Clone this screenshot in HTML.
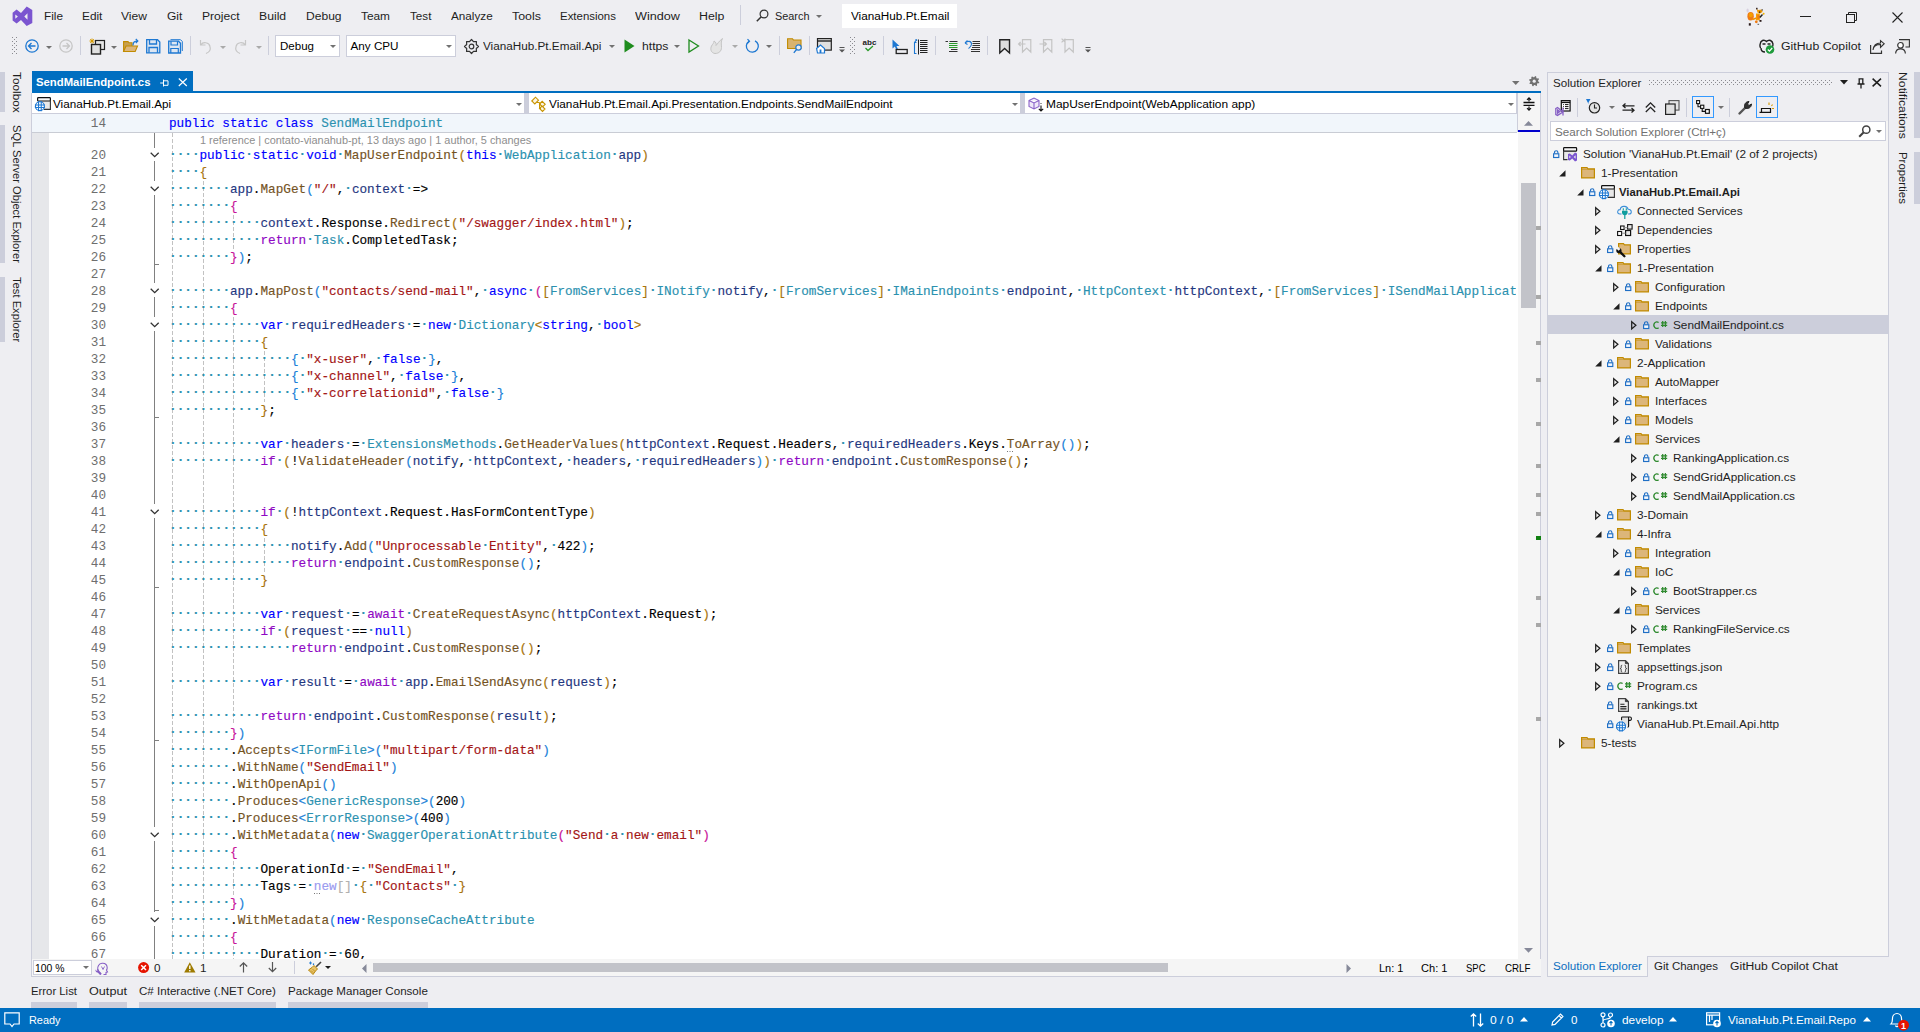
<!DOCTYPE html><html><head><meta charset="utf-8"><style>
*{margin:0;padding:0;box-sizing:border-box}
html,body{width:1920px;height:1032px;overflow:hidden;background:#EEEEF2;font-family:"Liberation Sans",sans-serif;font-size:11.7px;color:#1E1E1E}
.a{position:absolute;white-space:nowrap}
.t{line-height:14px}
.code{font-family:"Liberation Mono",monospace;font-size:12.69px;line-height:17px;color:#000;-webkit-text-stroke:0.15px}
.code i{font-style:normal;color:#2B91AF;font-weight:bold;position:relative;top:-0.8px}
.code b{font-weight:normal}
.code s{text-decoration:none}
.kw{color:#0000FF}.ctl{color:#8F08C4}.ty{color:#2B91AF}.me{color:#74531F}.lo{color:#1F377F}.pr{color:#000}.str{color:#A31515}
.b1{color:#C8149A}.b2{color:#A8740C}.b3{color:#1A7FD8}
.ln{font-family:"Liberation Mono",monospace;font-size:12.69px;line-height:17px;color:#6E6E6E;text-align:right;width:60px}
svg{position:absolute;overflow:visible}
.v{writing-mode:vertical-rl;line-height:14px}
</style></head><body>
<div class="a t" style="left:43.5px;top:8.5px;;transform:scaleX(1.0078);transform-origin:0 0">File</div>
<div class="a t" style="left:82.0px;top:8.5px;;transform:scaleX(1.0118);transform-origin:0 0">Edit</div>
<div class="a t" style="left:121.4px;top:8.5px;;transform:scaleX(1.0338);transform-origin:0 0">View</div>
<div class="a t" style="left:167.0px;top:8.5px;;transform:scaleX(1.0301);transform-origin:0 0">Git</div>
<div class="a t" style="left:201.5px;top:8.5px;;transform:scaleX(1.0367);transform-origin:0 0">Project</div>
<div class="a t" style="left:258.9px;top:8.5px;;transform:scaleX(1.0454);transform-origin:0 0">Build</div>
<div class="a t" style="left:305.5px;top:8.5px;;transform:scaleX(1.0325);transform-origin:0 0">Debug</div>
<div class="a t" style="left:360.5px;top:8.5px;;transform:scaleX(1.0136);transform-origin:0 0">Team</div>
<div class="a t" style="left:410.1px;top:8.5px;;transform:scaleX(0.9973);transform-origin:0 0">Test</div>
<div class="a t" style="left:450.75px;top:8.5px;;transform:scaleX(1.0030);transform-origin:0 0">Analyze</div>
<div class="a t" style="left:511.5px;top:8.5px;;transform:scaleX(1.0617);transform-origin:0 0">Tools</div>
<div class="a t" style="left:559.5px;top:8.5px;;transform:scaleX(0.9785);transform-origin:0 0">Extensions</div>
<div class="a t" style="left:634.5px;top:8.5px;;transform:scaleX(1.0814);transform-origin:0 0">Window</div>
<div class="a t" style="left:698.75px;top:8.5px;;transform:scaleX(1.0597);transform-origin:0 0">Help</div>
<div class="a " style="left:740px;top:5px;width:1px;height:20px;background:#CCCEDB"></div>
<svg style="left:11.5px;top:5.5px;" width="21" height="21" viewBox="0 0 21 21"><path d="M0.6,6.8 L4.6,3.5 L9.0,7.1 L14.7,0.6 L20.3,4.1 L20.3,17.1 L14.7,20.1 L9.0,14.0 L4.6,17.4 L0.6,14.4 Z M3.3,8.4 L5.9,10.6 L3.3,12.8 Z M15.5,7.3 L12.3,10.6 L15.5,13.7 Z" fill="#7B55D0" fill-rule="evenodd"/></svg>
<svg style="left:756px;top:9px;" width="13" height="13" viewBox="0 0 13 13"><circle cx="8" cy="5" r="3.9" fill="none" stroke="#333" stroke-width="1.2"/><path d="M5.3,7.7 L0.8,12.2" stroke="#333" stroke-width="1.5"/></svg>
<div class="a t" style="left:775px;top:8.5px;;transform:scaleX(0.9306);transform-origin:0 0">Search</div>
<svg style="left:815.5px;top:15px;" width="6" height="3" viewBox="0 0 6 3"><path d="M0,0 H6 L3.0,3 Z" fill="#717171"/></svg>
<div class="a " style="left:842px;top:4px;width:115px;height:23.5px;background:#fff"></div>
<div class="a t" style="left:850.5px;top:8.5px;color:#000;transform:scaleX(1.0052);transform-origin:0 0">VianaHub.Pt.Email</div>
<svg style="left:1744.5px;top:6px;" width="20" height="20" viewBox="0 0 20 20"><ellipse cx="5.6" cy="10.3" rx="3.2" ry="4.2" fill="#F07A12"/><ellipse cx="5.8" cy="9" rx="2" ry="2.3" fill="#F5A000"/><ellipse cx="2.6" cy="4.6" rx="1.1" ry="2" fill="#D8D0E0"/><path d="M7.5,13.5 L11.5,12" stroke="#F29000" stroke-width="1.8"/><rect x="11" y="7.5" width="3.8" height="6.8" fill="#F5A000"/><rect x="12.4" y="9" width="2" height="4" fill="#F07A12"/><path d="M11.5,2.5 L13,4 L17,3.5 L17.5,6 L15,7.5 L12.5,6.5 Z" fill="#F29A00"/><rect x="11" y="1.8" width="1.6" height="1.6" fill="#3A2A2A"/><rect x="16.6" y="3" width="1.2" height="1.8" fill="#6A6A70"/><rect x="14" y="5.5" width="1.3" height="1.3" fill="#222"/><path d="M14.8,11.5 L17.5,8.5" stroke="#222" stroke-width="1.5"/><circle cx="18.6" cy="7.8" r="1" fill="#F2B000"/><circle cx="11.3" cy="15.8" r="1.4" fill="#F07A12"/><rect x="3.8" y="17.2" width="2" height="2.4" fill="#2A1A1A"/><rect x="14.5" y="14" width="2" height="1.8" fill="#2A1A1A"/><rect x="12.5" y="17.8" width="1.6" height="1" fill="#555"/></svg>
<div class="a " style="left:1800px;top:16px;width:10.5px;height:1px;background:#222"></div>
<svg style="left:1845.5px;top:11.5px;" width="12" height="12" viewBox="0 0 12 12"><rect x="0.5" y="2.5" width="8" height="8" fill="none" stroke="#222" stroke-width="1"/><path d="M2.5,2.5 V0.5 H10.5 V8.5 H8.5" fill="none" stroke="#222" stroke-width="1"/></svg>
<svg style="left:1891.5px;top:11.5px;" width="11" height="11" viewBox="0 0 11 11"><path d="M0.5,0.5 L10.5,10.5 M10.5,0.5 L0.5,10.5" stroke="#222" stroke-width="1.1"/></svg>
<svg style="left:12px;top:37px;" width="5" height="17" viewBox="0 0 5 17"><rect x="0" y="0" width="1" height="1" fill="#8A8A90"/><rect x="4" y="0" width="1" height="1" fill="#8A8A90"/><rect x="2" y="2" width="1" height="1" fill="#8A8A90"/><rect x="0" y="4" width="1" height="1" fill="#8A8A90"/><rect x="4" y="4" width="1" height="1" fill="#8A8A90"/><rect x="2" y="6" width="1" height="1" fill="#8A8A90"/><rect x="0" y="8" width="1" height="1" fill="#8A8A90"/><rect x="4" y="8" width="1" height="1" fill="#8A8A90"/><rect x="2" y="10" width="1" height="1" fill="#8A8A90"/><rect x="0" y="12" width="1" height="1" fill="#8A8A90"/><rect x="4" y="12" width="1" height="1" fill="#8A8A90"/><rect x="2" y="14" width="1" height="1" fill="#8A8A90"/><rect x="0" y="16" width="1" height="1" fill="#8A8A90"/><rect x="4" y="16" width="1" height="1" fill="#8A8A90"/></svg>
<svg style="left:24.5px;top:38.5px;" width="15" height="15" viewBox="0 0 15 15"><circle cx="7" cy="7" r="6.2" fill="none" stroke="#1E78D2" stroke-width="1.3"/><path d="M10.5,7 H3.6 M6.5,4 L3.5,7 L6.5,10" fill="none" stroke="#1E78D2" stroke-width="1.3"/></svg>
<svg style="left:46px;top:46px;" width="6" height="3" viewBox="0 0 6 3"><path d="M0,0 H6 L3.0,3 Z" fill="#717171"/></svg>
<svg style="left:58.5px;top:38.5px;" width="15" height="15" viewBox="0 0 15 15"><circle cx="7" cy="7" r="6.2" fill="none" stroke="#C6C6C6" stroke-width="1.3"/><path d="M3.5,7 H10.4 M7.5,4 L10.5,7 L7.5,10" fill="none" stroke="#C6C6C6" stroke-width="1.3"/></svg>
<div class="a" style="left:80px;top:36px;width:1px;height:19px;background:#CCCEDB"></div>
<svg style="left:88.5px;top:38px;" width="17" height="17" viewBox="0 0 17 17"><path d="M3,0.5 V5.5 M0.5,3 H5.5 M1.2,1.2 L4.8,4.8 M4.8,1.2 L1.2,4.8" stroke="#D69A00" stroke-width="1"/><rect x="6.5" y="2.5" width="9" height="9" fill="#E6E6E6" stroke="#222" stroke-width="1.2"/><rect x="2.5" y="6.5" width="9" height="9.5" fill="#E0E0E0" stroke="#222" stroke-width="1.4"/></svg>
<svg style="left:111px;top:46px;" width="6" height="3" viewBox="0 0 6 3"><path d="M0,0 H6 L3.0,3 Z" fill="#717171"/></svg>
<svg style="left:123px;top:38px;" width="16" height="15" viewBox="0 0 16 15"><path d="M0.6,3.6 H5 L6,4.8 H9 V13.5 H0.6 Z" fill="#C8A050" stroke="#C18B00" stroke-width="1.1"/><path d="M0.6,13.5 L3,8 H14.5 L12.2,13.5 Z" fill="#DCB67A" stroke="#C18B00" stroke-width="1.1"/><path d="M10,7.5 C10,4 11.5,3 14.5,3 M12.8,1 L14.8,3 L12.8,5" fill="none" stroke="#1E78D2" stroke-width="1.2"/></svg>
<svg style="left:146px;top:38.5px;" width="15" height="15" viewBox="0 0 15 15"><path d="M0.7,0.7 H11.5 L13.8,3 V13.8 H0.7 Z" fill="#DDE6F2" stroke="#1E78D2" stroke-width="1.3"/><path d="M3.5,0.7 V5 H10.5 V0.7 M3,13.8 V8.5 H11.5 V13.8" fill="none" stroke="#1E78D2" stroke-width="1.3"/></svg>
<svg style="left:167.5px;top:38.5px;" width="15" height="15" viewBox="0 0 15 15"><path d="M2.5,0.7 H12.5 L14.3,2.5 V12" fill="none" stroke="#1E78D2" stroke-width="1"/><path d="M0.7,2.2 H10.5 L12.5,4.2 V14 H0.7 Z" fill="#DDE6F2" stroke="#1E78D2" stroke-width="1.3"/><path d="M3,2.2 V6 H9.5 V2.2 M2.8,14 V9.5 H10.3 V14" fill="none" stroke="#1E78D2" stroke-width="1.2"/></svg>
<div class="a" style="left:190px;top:36px;width:1px;height:19px;background:#CCCEDB"></div>
<svg style="left:198.5px;top:38.5px;" width="13" height="15" viewBox="0 0 13 15"><g ><path d="M1.5,1 V6 H6.5 M1.8,5.8 C4,2.5 10,3 11,7.5 C12,11 9.5,13.5 7,14.5" fill="none" stroke="#C6C6C6" stroke-width="1.2"/></g></svg>
<svg style="left:219.5px;top:46px;" width="6" height="3" viewBox="0 0 6 3"><path d="M0,0 H6 L3.0,3 Z" fill="#AAA"/></svg>
<svg style="left:234px;top:38.5px;" width="13" height="15" viewBox="0 0 13 15"><g transform="translate(13,0) scale(-1,1)"><path d="M1.5,1 V6 H6.5 M1.8,5.8 C4,2.5 10,3 11,7.5 C12,11 9.5,13.5 7,14.5" fill="none" stroke="#C6C6C6" stroke-width="1.2"/></g></svg>
<svg style="left:256px;top:46px;" width="6" height="3" viewBox="0 0 6 3"><path d="M0,0 H6 L3.0,3 Z" fill="#AAA"/></svg>
<div class="a" style="left:267.5px;top:36px;width:1px;height:19px;background:#CCCEDB"></div>
<div class="a " style="left:275px;top:35px;width:65px;height:22px;background:#fff;border:1px solid #CCCEDB"></div>
<div class="a t" style="left:279.5px;top:39px;color:#000;transform:scaleX(0.9861);transform-origin:0 0">Debug</div>
<svg style="left:330px;top:44.6px;" width="6" height="3" viewBox="0 0 6 3"><path d="M0,0 H6 L3.0,3 Z" fill="#717171"/></svg>
<div class="a " style="left:346px;top:35px;width:110px;height:22px;background:#fff;border:1px solid #CCCEDB"></div>
<div class="a t" style="left:350.5px;top:39px;color:#000">Any CPU</div>
<svg style="left:446px;top:44.6px;" width="6" height="3" viewBox="0 0 6 3"><path d="M0,0 H6 L3.0,3 Z" fill="#717171"/></svg>
<svg style="left:463.5px;top:38.5px;" width="15" height="15" viewBox="0 0 15 15"><polygon points="14.50,7.50 12.30,9.49 12.45,12.45 9.49,12.30 7.50,14.50 5.51,12.30 2.55,12.45 2.70,9.49 0.50,7.50 2.70,5.51 2.55,2.55 5.51,2.70 7.50,0.50 9.49,2.70 12.45,2.55 12.30,5.51" fill="none" stroke="#333" stroke-width="1.2" stroke-linejoin="round"/><circle cx="7.5" cy="7.5" r="2.3" fill="none" stroke="#333" stroke-width="1.2"/></svg>
<div class="a t" style="left:483px;top:39px;;transform:scaleX(1.0029);transform-origin:0 0">VianaHub.Pt.Email.Api</div>
<svg style="left:608.5px;top:45px;" width="6" height="3" viewBox="0 0 6 3"><path d="M0,0 H6 L3.0,3 Z" fill="#717171"/></svg>
<svg style="left:623.5px;top:39px;" width="11" height="14" viewBox="0 0 11 14"><path d="M0.5,0.5 L10.5,7 L0.5,13.5 Z" fill="#1E8C1E"/></svg>
<div class="a t" style="left:641.5px;top:39px;;transform:scaleX(1.0447);transform-origin:0 0">https</div>
<svg style="left:673.5px;top:45px;" width="6" height="3" viewBox="0 0 6 3"><path d="M0,0 H6 L3.0,3 Z" fill="#717171"/></svg>
<svg style="left:687.5px;top:39px;" width="12" height="14" viewBox="0 0 12 14"><path d="M1,1 L10.5,7 L1,13 Z" fill="none" stroke="#1E8C1E" stroke-width="1.3"/></svg>
<svg style="left:710px;top:38px;" width="13" height="16" viewBox="0 0 13 16"><path d="M5,15.5 C1,15 0,11 1.5,8 C2.5,6 4,5.5 4,3 C6,4 6.5,6 6,7.5 C7.5,6 9,3 12.5,0.5 C10.5,4 11.5,6 11.5,9.5 C11.5,13 9,15.5 5,15.5 Z" fill="#E4E4E4" stroke="#C4C4C4" stroke-width="1"/></svg>
<svg style="left:732px;top:45px;" width="6" height="3" viewBox="0 0 6 3"><path d="M0,0 H6 L3.0,3 Z" fill="#AAA"/></svg>
<svg style="left:744.5px;top:38.5px;" width="15" height="15" viewBox="0 0 15 15"><path d="M4,2.2 A6,6 0 1 0 10,1.8" fill="none" stroke="#1E78D2" stroke-width="1.3"/><path d="M2.5,0.2 L4.5,2.3 L2.2,4.5" fill="none" stroke="#1E78D2" stroke-width="1.2"/></svg>
<svg style="left:766px;top:45px;" width="6" height="3" viewBox="0 0 6 3"><path d="M0,0 H6 L3.0,3 Z" fill="#717171"/></svg>
<div class="a" style="left:778.5px;top:36px;width:1px;height:19px;background:#CCCEDB"></div>
<svg style="left:787px;top:38px;" width="16" height="16" viewBox="0 0 16 16"><path d="M0.6,0.8 H5.5 L6.5,2 H14 V10.5 H0.6 Z" fill="#D9B36E" stroke="#C18B00" stroke-width="1.1"/><circle cx="11.5" cy="9.5" r="2.7" fill="#EEE" stroke="#1E78D2" stroke-width="1.2"/><path d="M9.5,11.5 L6.8,14.8" stroke="#1E78D2" stroke-width="1.3"/></svg>
<div class="a" style="left:808.5px;top:36px;width:1px;height:19px;background:#CCCEDB"></div>
<svg style="left:816px;top:38px;" width="16" height="16" viewBox="0 0 16 16"><rect x="1.5" y="0.6" width="13.8" height="11.5" fill="#E0E0E0" stroke="#222" stroke-width="1.2"/><path d="M1.5,3 H15.3" stroke="#222" stroke-width="1.4"/><path d="M0.6,10.5 L4.5,7 L8.5,10.5 V15 H1.5 Z" fill="#fff" stroke="#1E78D2" stroke-width="1.2"/><rect x="3.6" y="11.5" width="1.8" height="3.5" fill="#1E78D2"/></svg>
<svg style="left:839px;top:46.5px;" width="6" height="6" viewBox="0 0 6 6"><path d="M0.5,0.5 H5.5" stroke="#555" stroke-width="1"/><path d="M0,2.5 H6 L3,5.5 Z" fill="#555"/></svg>
<svg style="left:850px;top:37px;" width="5" height="17" viewBox="0 0 5 17"><rect x="0" y="0" width="1" height="1" fill="#8A8A90"/><rect x="4" y="0" width="1" height="1" fill="#8A8A90"/><rect x="2" y="2" width="1" height="1" fill="#8A8A90"/><rect x="0" y="4" width="1" height="1" fill="#8A8A90"/><rect x="4" y="4" width="1" height="1" fill="#8A8A90"/><rect x="2" y="6" width="1" height="1" fill="#8A8A90"/><rect x="0" y="8" width="1" height="1" fill="#8A8A90"/><rect x="4" y="8" width="1" height="1" fill="#8A8A90"/><rect x="2" y="10" width="1" height="1" fill="#8A8A90"/><rect x="0" y="12" width="1" height="1" fill="#8A8A90"/><rect x="4" y="12" width="1" height="1" fill="#8A8A90"/><rect x="2" y="14" width="1" height="1" fill="#8A8A90"/><rect x="0" y="16" width="1" height="1" fill="#8A8A90"/><rect x="4" y="16" width="1" height="1" fill="#8A8A90"/></svg>
<svg style="left:861.5px;top:38px;" width="15" height="15" viewBox="0 0 15 15"><text x="7.5" y="7" font-family="Liberation Sans" font-weight="bold" font-size="8" text-anchor="middle" fill="#222">abc</text><path d="M3.5,10 L6,12.5 L11,8" fill="none" stroke="#2A9A2A" stroke-width="1.3"/></svg>
<div class="a" style="left:883px;top:36px;width:1px;height:19px;background:#CCCEDB"></div>
<svg style="left:891.5px;top:38.5px;" width="16" height="16" viewBox="0 0 16 16"><path d="M0.5,0.5 V9.5 L2.8,7.5 L4.5,11 L6,10.3 L4.5,7 H7.5 Z" fill="#1E78D2"/><rect x="4.2" y="10.5" width="11" height="4" fill="none" stroke="#222" stroke-width="1.3"/></svg>
<svg style="left:914px;top:38.5px;" width="15" height="16" viewBox="0 0 15 16"><path d="M2.5,3.5 H0.5 V14.5 H2.5 M0.5,3.5 L2.5,0.8" fill="none" stroke="#1E78D2" stroke-width="1.1"/><path d="M1.5,0.5 L2.8,0.7 L2.6,2" fill="none" stroke="#1E78D2" stroke-width="1"/><path d="M4.5,0.5 V15.5" stroke="#222" stroke-width="1"/><path d="M6,1.5 H13.5 M6,3.5 H13.5 M6,5.5 H13.5 M6,7.5 H13.5 M6,9.5 H13.5 M6,11.5 H13.5 M6,13.5 H13.5" stroke="#222" stroke-width="1"/></svg>
<div class="a" style="left:934.8px;top:36px;width:1px;height:19px;background:#CCCEDB"></div>
<svg style="left:945px;top:39px;" width="14" height="14" viewBox="0 0 14 14"><path d="M0.5,2.5 H3 M4.5,2.5 H12.5 M6,10.5 H12.5 M4,12.5 H12.5" stroke="#333" stroke-width="1"/><path d="M4,4.5 H12.5 M4,6.5 H12.5 M4,8.5 H12.5" stroke="#2A9A2A" stroke-width="1"/></svg>
<svg style="left:964px;top:39px;" width="17" height="14" viewBox="0 0 17 14"><path d="M1,4 L3.5,1.5 M1,4 L3.5,5.5 M1.3,4 C3.5,1.5 7.5,1.8 7.5,5 C7.5,7.5 5.5,8.5 4.5,9.5" fill="none" stroke="#1E78D2" stroke-width="1.1"/><path d="M8.5,2.5 H16 M8.5,4.5 H16 M8.5,6.5 H16 M8,8.5 H16 M7,10.5 H16 M7,12.5 H16" stroke="#333" stroke-width="1"/></svg>
<div class="a" style="left:987px;top:36px;width:1px;height:19px;background:#CCCEDB"></div>
<svg style="left:998.5px;top:39px;" width="12" height="15" viewBox="0 0 12 15"><path d="M0.8,0.8 H10.5 V14 L5.6,9.5 L0.8,14 Z" fill="#DDD" stroke="#222" stroke-width="1.4"/></svg>
<svg style="left:1018px;top:39px;" width="14" height="14" viewBox="0 0 14 14"><path d="M4.5,0.7 H12.8 V13 L8.65,9 L4.5,13 Z M0.5,5 H7.5 M2.6,3 L0.6,5 L2.6,7" fill="none" stroke="#C4C4C4" stroke-width="1.2"/></svg>
<svg style="left:1039px;top:39px;" width="14" height="14" viewBox="0 0 14 14"><path d="M4.5,0.7 H12.8 V13 L8.65,9 L4.5,13 Z M0.5,5 H7.5 M5.4,3 L7.4,5 L5.4,7" fill="none" stroke="#C4C4C4" stroke-width="1.2"/></svg>
<svg style="left:1060.5px;top:38px;" width="14" height="15" viewBox="0 0 14 15"><path d="M4,1.7 H12.3 V14 L8.15,10 L4,14 Z M0.6,0.6 L4.4,4.4 M4.4,0.6 L0.6,4.4" fill="none" stroke="#C4C4C4" stroke-width="1.2"/></svg>
<svg style="left:1085px;top:47px;" width="6" height="6" viewBox="0 0 6 6"><path d="M0.5,0.5 H5.5" stroke="#555" stroke-width="1"/><path d="M0,2.5 H6 L3,5.5 Z" fill="#555"/></svg>
<svg style="left:1758.5px;top:38.5px;" width="16" height="15" viewBox="0 0 16 15"><path d="M2,9 C0.5,9 0.3,3 3.5,1.5 C5,0.8 6.5,1.5 7.5,2.5 C8.5,1.5 10,0.8 11.5,1.5 C14.5,3 14.5,7 13,8 M2,9 C2,12 4,13 6,13" fill="none" stroke="#222" stroke-width="1.4"/><path d="M3.5,5 H6.5 M8.5,5 H11.5" stroke="#222" stroke-width="1.3"/><circle cx="11" cy="10.5" r="4.3" fill="#1E9B3C"/><path d="M8.8,10.5 L10.5,12.2 L13.2,9" fill="none" stroke="#fff" stroke-width="1.2"/></svg>
<div class="a t" style="left:1780.5px;top:39px;;transform:scaleX(1.0514);transform-origin:0 0">GitHub Copilot</div>
<svg style="left:1869.5px;top:39.5px;" width="15" height="14" viewBox="0 0 15 14"><path d="M0.6,5 V13.4 H11.5 V10.5" fill="none" stroke="#333" stroke-width="1.2"/><path d="M3,10 C3.5,6 6.5,4.5 10.5,4.5 V7.5 L14.2,3.7 L10.5,0.6 V3 C6,3 3.5,6 3,10 Z" fill="#E8E8E8" stroke="#333" stroke-width="1.1"/></svg>
<svg style="left:1894.5px;top:38.5px;" width="15" height="15" viewBox="0 0 15 15"><path d="M4,0.6 H14.4 V8 H10.5" fill="#E6E6E6" stroke="#333" stroke-width="1.1"/><circle cx="5.5" cy="6.3" r="2.8" fill="#fff" stroke="#333" stroke-width="1.2"/><path d="M0.6,14.5 C0.8,11 2.8,9.8 5.5,9.8 C8.2,9.8 10.2,11 10.4,14.5" fill="none" stroke="#333" stroke-width="1.2"/></svg>
<div class="a " style="left:0px;top:71.6px;width:5px;height:40.7px;background:#CCCEDB"></div>
<div class="a v" style="left:10px;top:71.6px;width:14px;transform:scaleY(1.0092);transform-origin:0 0;">Toolbox</div>
<div class="a " style="left:0px;top:125.4px;width:5px;height:138.1px;background:#CCCEDB"></div>
<div class="a v" style="left:10px;top:125.4px;width:14px;transform:scaleY(0.9552);transform-origin:0 0;">SQL Server Object Explorer</div>
<div class="a " style="left:0px;top:276.6px;width:5px;height:65.4px;background:#CCCEDB"></div>
<div class="a v" style="left:10px;top:276.6px;width:14px;transform:scaleY(0.9579);transform-origin:0 0;">Test Explorer</div>
<div class="a " style="left:32px;top:71px;width:161px;height:22px;background:#006EC0"></div>
<div class="a t" style="left:36px;top:75.3px;color:#fff;font-weight:bold;font-size:11.6px;transform:scaleX(0.9761);transform-origin:0 0">SendMailEndpoint.cs</div>
<svg style="left:160px;top:79px;" width="9" height="8" viewBox="0 0 9 8"><path d="M0.2,4 H3.5 M3.5,0.5 V7.5 M3.5,1.8 H8 V6.3 H3.5" fill="none" stroke="#fff" stroke-width="1"/></svg>
<svg style="left:178.3px;top:78px;" width="10" height="8.5" viewBox="0 0 10 8.5"><path d="M0.8,0.5 L8.8,8 M8.8,0.5 L0.8,8" stroke="#fff" stroke-width="1.2"/></svg>
<svg style="left:1512px;top:81px;" width="7.5" height="4" viewBox="0 0 7.5 4"><path d="M0,0 H7.5 L3.75,4 Z" fill="#717171"/></svg>
<svg style="left:1529px;top:76px;" width="11" height="11" viewBox="0 0 11 11"><polygon points="10.30,6.21 10.00,7.19 8.44,7.37 7.96,7.96 8.09,9.52 7.19,10.00 5.96,9.03 5.20,9.10 4.19,10.30 3.21,10.00 3.03,8.44 2.44,7.96 0.88,8.09 0.40,7.19 1.37,5.96 1.30,5.20 0.10,4.19 0.40,3.21 1.96,3.03 2.44,2.44 2.31,0.88 3.21,0.40 4.44,1.37 5.20,1.30 6.21,0.10 7.19,0.40 7.37,1.96 7.96,2.44 9.52,2.31 10.00,3.21 9.03,4.44 9.10,5.20" fill="#717171"/><circle cx="5.2" cy="5.2" r="1.6" fill="#EEEEF2"/></svg>
<div class="a " style="left:32px;top:91px;width:1509px;height:2px;background:#006EC0"></div>
<div class="a " style="left:31px;top:93px;width:1510px;height:884px;background:#fff;border-left:1px solid #CCCEDB;border-right:1px solid #CCCEDB;border-bottom:1px solid #CCCEDB"></div>
<div class="a " style="left:32px;top:113px;width:1508.5px;height:1.5px;background:#CCCEDB"></div>
<div class="a " style="left:524px;top:93px;width:5px;height:20px;background:#CCCEDB"></div>
<div class="a " style="left:1020px;top:93px;width:5px;height:20px;background:#CCCEDB"></div>
<div class="a " style="left:1516.3px;top:93px;width:1.5px;height:39px;background:#CCCEDB"></div>
<div class="a " style="left:1517.8px;top:93px;width:22.2px;height:866px;background:#F5F5F5"></div>
<svg style="left:34px;top:96.5px;" width="17" height="16" viewBox="0 0 17 16"><rect x="4" y="3.2" width="12" height="9" fill="#E8E8E8"/><rect x="3.6" y="0.6" width="12.8" height="3.4" rx="0.8" fill="#F8F8F8" stroke="#111" stroke-width="1.2"/><path d="M16.4,3.5 V12.4 H10" fill="none" stroke="#333" stroke-width="1.1"/><circle cx="5.9" cy="9.2" r="5" fill="#1E78D2"/><circle cx="5.9" cy="9.2" r="3.85" fill="#fff"/><path d="M0.9000000000000004,7.949999999999999 H10.9 M0.9000000000000004,10.45 H10.9 M4.550000000000001,4.199999999999999 V14.2 M7.25,4.199999999999999 V14.2" stroke="#1E78D2" stroke-width="1.05"/></svg>
<div class="a t" style="left:53px;top:97px;color:#000">VianaHub.Pt.Email.Api</div>
<svg style="left:516px;top:103px;" width="6" height="3" viewBox="0 0 6 3"><path d="M0,0 H6 L3.0,3 Z" fill="#717171"/></svg>
<svg style="left:531px;top:96px;" width="17" height="17" viewBox="0 0 17 17"><g fill="#FBF4E4" stroke="#C89400" stroke-width="1.1"><path d="M0.8,5 L4.5,1.2 L7.5,4.2 L3.8,8 Z"/><path d="M8.5,8 L11.2,5.3 L14.2,8.3 L11.5,11 Z"/><path d="M8.5,12.5 L11,10 L14,13 L11.5,15.5 Z"/></g><path d="M5.5,6.5 H8.5 V12.5 H10 M8.5,8 H10" fill="none" stroke="#C89400" stroke-width="1"/></svg>
<div class="a t" style="left:549px;top:97px;color:#000;transform:scaleX(1.0100);transform-origin:0 0">VianaHub.Pt.Email.Api.Presentation.Endpoints.SendMailEndpoint</div>
<svg style="left:1012px;top:103px;" width="6" height="3" viewBox="0 0 6 3"><path d="M0,0 H6 L3.0,3 Z" fill="#717171"/></svg>
<svg style="left:1028px;top:96.5px;" width="17" height="16" viewBox="0 0 17 16"><path d="M1,3.5 L6,1 L11,3.5 V9.5 L6,12 L1,9.5 Z M1,3.5 L6,6 L11,3.5 M6,6 V12" fill="#EFE8F8" stroke="#8A63C8" stroke-width="1.1"/><path d="M13,6 V6.8 M13,8.5 V13.8 M10.8,11.8 L13,14 L15.2,11.8" fill="none" stroke="#111" stroke-width="1.1"/></svg>
<div class="a t" style="left:1045.5px;top:97px;color:#000;transform:scaleX(1.0204);transform-origin:0 0">MapUserEndpoint(WebApplication app)</div>
<svg style="left:1508px;top:103px;" width="6" height="3" viewBox="0 0 6 3"><path d="M0,0 H6 L3.0,3 Z" fill="#717171"/></svg>
<svg style="left:1523px;top:97px;" width="12" height="14" viewBox="0 0 12 14"><path d="M0.5,5.5 H11.5 M0.5,8.3 H11.5" stroke="#111" stroke-width="1.3"/><path d="M6,1 V4.5 M6,9.5 V13 M4,2.8 L6,0.8 L8,2.8 M4,11.2 L6,13.2 L8,11.2" fill="none" stroke="#111" stroke-width="1.2"/></svg>
<div class="a " style="left:32px;top:114px;width:1484.5px;height:18px;background:#F1F6FB"></div>
<div class="a " style="left:32px;top:131.6px;width:1484.5px;height:1.2px;background:#C9CCD4"></div>
<div class="a ln" style="left:46px;top:115.3px">14</div>
<div class="a code" style="left:169px;top:115.3px"><s class="kw">public</s> <s class="kw">static</s> <s class="kw">class</s> <s class="ty">SendMailEndpoint</s></div>
<div class="a " style="left:32px;top:132.8px;width:17px;height:826.2px;background:#E6E7EA"></div>
<div class="a t" style="left:200px;top:133.3px;font-size:10.9px;color:#8E8E8E;transform:scaleX(1.0031);transform-origin:0 0">1 reference | contato-vianahub-pt, 13 days ago | 1 author, 5 changes</div>
<div class="a" style="left:172.3px;top:133.0px;width:1px;height:826.0px;background:repeating-linear-gradient(to bottom,#C2C2C2 0 4px,transparent 4px 6px)"></div><div class="a" style="left:202.8px;top:180.8px;width:1px;height:782.0px;background:repeating-linear-gradient(to bottom,#C2C2C2 0 4px,transparent 4px 6px)"></div><div class="a" style="left:233.2px;top:214.8px;width:1px;height:34.0px;background:repeating-linear-gradient(to bottom,#C2C2C2 0 4px,transparent 4px 6px)"></div><div class="a" style="left:233.2px;top:316.8px;width:1px;height:408.0px;background:repeating-linear-gradient(to bottom,#C2C2C2 0 4px,transparent 4px 6px)"></div><div class="a" style="left:263.7px;top:350.8px;width:1px;height:51.0px;background:repeating-linear-gradient(to bottom,#C2C2C2 0 4px,transparent 4px 6px)"></div><div class="a" style="left:263.7px;top:537.8px;width:1px;height:34.0px;background:repeating-linear-gradient(to bottom,#C2C2C2 0 4px,transparent 4px 6px)"></div><div class="a" style="left:233.2px;top:860.8px;width:1px;height:34.0px;background:repeating-linear-gradient(to bottom,#C2C2C2 0 4px,transparent 4px 6px)"></div><div class="a" style="left:233.2px;top:945.8px;width:1px;height:17.0px;background:repeating-linear-gradient(to bottom,#C2C2C2 0 4px,transparent 4px 6px)"></div>
<div class="a ln" style="left:46px;top:146.8px">20</div>
<div class="a ln" style="left:46px;top:163.8px">21</div>
<div class="a ln" style="left:46px;top:180.8px">22</div>
<div class="a ln" style="left:46px;top:197.8px">23</div>
<div class="a ln" style="left:46px;top:214.8px">24</div>
<div class="a ln" style="left:46px;top:231.8px">25</div>
<div class="a ln" style="left:46px;top:248.8px">26</div>
<div class="a ln" style="left:46px;top:265.8px">27</div>
<div class="a ln" style="left:46px;top:282.8px">28</div>
<div class="a ln" style="left:46px;top:299.8px">29</div>
<div class="a ln" style="left:46px;top:316.8px">30</div>
<div class="a ln" style="left:46px;top:333.8px">31</div>
<div class="a ln" style="left:46px;top:350.8px">32</div>
<div class="a ln" style="left:46px;top:367.8px">33</div>
<div class="a ln" style="left:46px;top:384.8px">34</div>
<div class="a ln" style="left:46px;top:401.8px">35</div>
<div class="a ln" style="left:46px;top:418.8px">36</div>
<div class="a ln" style="left:46px;top:435.8px">37</div>
<div class="a ln" style="left:46px;top:452.8px">38</div>
<div class="a ln" style="left:46px;top:469.8px">39</div>
<div class="a ln" style="left:46px;top:486.8px">40</div>
<div class="a ln" style="left:46px;top:503.8px">41</div>
<div class="a ln" style="left:46px;top:520.8px">42</div>
<div class="a ln" style="left:46px;top:537.8px">43</div>
<div class="a ln" style="left:46px;top:554.8px">44</div>
<div class="a ln" style="left:46px;top:571.8px">45</div>
<div class="a ln" style="left:46px;top:588.8px">46</div>
<div class="a ln" style="left:46px;top:605.8px">47</div>
<div class="a ln" style="left:46px;top:622.8px">48</div>
<div class="a ln" style="left:46px;top:639.8px">49</div>
<div class="a ln" style="left:46px;top:656.8px">50</div>
<div class="a ln" style="left:46px;top:673.8px">51</div>
<div class="a ln" style="left:46px;top:690.8px">52</div>
<div class="a ln" style="left:46px;top:707.8px">53</div>
<div class="a ln" style="left:46px;top:724.8px">54</div>
<div class="a ln" style="left:46px;top:741.8px">55</div>
<div class="a ln" style="left:46px;top:758.8px">56</div>
<div class="a ln" style="left:46px;top:775.8px">57</div>
<div class="a ln" style="left:46px;top:792.8px">58</div>
<div class="a ln" style="left:46px;top:809.8px">59</div>
<div class="a ln" style="left:46px;top:826.8px">60</div>
<div class="a ln" style="left:46px;top:843.8px">61</div>
<div class="a ln" style="left:46px;top:860.8px">62</div>
<div class="a ln" style="left:46px;top:877.8px">63</div>
<div class="a ln" style="left:46px;top:894.8px">64</div>
<div class="a ln" style="left:46px;top:911.8px">65</div>
<div class="a ln" style="left:46px;top:928.8px">66</div>
<div class="a ln" style="left:46px;top:945.8px">67</div>
<div class="a" style="left:49px;top:133px;width:1467.3px;height:826px;overflow:hidden"><div class="a code" style="left:120px;top:13.8px"><i>·</i><i>·</i><i>·</i><i>·</i><s class="kw">public</s><i>·</i><s class="kw">static</s><i>·</i><s class="kw">void</s><i>·</i><s class="me">MapUserEndpoint</s><b class="b2">(</b><s class="kw">this</s><i>·</i><s class="ty">WebApplication</s><i>·</i><s class="lo">app</s><b class="b2">)</b></div><div class="a code" style="left:120px;top:30.8px"><i>·</i><i>·</i><i>·</i><i>·</i><b class="b2">{</b></div><div class="a code" style="left:120px;top:47.8px"><i>·</i><i>·</i><i>·</i><i>·</i><i>·</i><i>·</i><i>·</i><i>·</i><s class="lo">app</s><s class="pr">.</s><s class="me">MapGet</s><b class="b3">(</b><s class="str">&quot;/&quot;</s><s class="pr">,</s><i>·</i><s class="lo">context</s><i>·</i><s class="pr">=&gt;</s></div><div class="a code" style="left:120px;top:64.8px"><i>·</i><i>·</i><i>·</i><i>·</i><i>·</i><i>·</i><i>·</i><i>·</i><b class="b1">{</b></div><div class="a code" style="left:120px;top:81.8px"><i>·</i><i>·</i><i>·</i><i>·</i><i>·</i><i>·</i><i>·</i><i>·</i><i>·</i><i>·</i><i>·</i><i>·</i><s class="lo">context</s><s class="pr">.</s><s class="pr">Response</s><s class="pr">.</s><s class="me">Redirect</s><b class="b2">(</b><s class="str">&quot;/swagger/index.html&quot;</s><b class="b2">)</b><s class="pr">;</s></div><div class="a code" style="left:120px;top:98.8px"><i>·</i><i>·</i><i>·</i><i>·</i><i>·</i><i>·</i><i>·</i><i>·</i><i>·</i><i>·</i><i>·</i><i>·</i><s class="ctl">return</s><i>·</i><s class="ty">Task</s><s class="pr">.</s><s class="pr">CompletedTask</s><s class="pr">;</s></div><div class="a code" style="left:120px;top:115.8px"><i>·</i><i>·</i><i>·</i><i>·</i><i>·</i><i>·</i><i>·</i><i>·</i><b class="b1">}</b><b class="b3">)</b><s class="pr">;</s></div><div class="a code" style="left:120px;top:132.8px"></div><div class="a code" style="left:120px;top:149.8px"><i>·</i><i>·</i><i>·</i><i>·</i><i>·</i><i>·</i><i>·</i><i>·</i><s class="lo">app</s><s class="pr">.</s><s class="me">MapPost</s><b class="b3">(</b><s class="str">&quot;contacts/send-mail&quot;</s><s class="pr">,</s><i>·</i><s class="kw">async</s><i>·</i><b class="b1">(</b><b class="b2">[</b><s class="ty">FromServices</s><b class="b2">]</b><i>·</i><s class="ty">INotify</s><i>·</i><s class="lo">notify</s><s class="pr">,</s><i>·</i><b class="b2">[</b><s class="ty">FromServices</s><b class="b2">]</b><i>·</i><s class="ty">IMainEndpoints</s><i>·</i><s class="lo">endpoint</s><s class="pr">,</s><i>·</i><s class="ty">HttpContext</s><i>·</i><s class="lo">httpContext</s><s class="pr">,</s><i>·</i><b class="b2">[</b><s class="ty">FromServices</s><b class="b2">]</b><i>·</i><s class="ty">ISendMailApplicat</s></div><div class="a code" style="left:120px;top:166.8px"><i>·</i><i>·</i><i>·</i><i>·</i><i>·</i><i>·</i><i>·</i><i>·</i><b class="b1">{</b></div><div class="a code" style="left:120px;top:183.8px"><i>·</i><i>·</i><i>·</i><i>·</i><i>·</i><i>·</i><i>·</i><i>·</i><i>·</i><i>·</i><i>·</i><i>·</i><s class="kw">var</s><i>·</i><s class="lo">requiredHeaders</s><i>·</i><s class="pr">=</s><i>·</i><s class="kw">new</s><i>·</i><s class="ty">Dictionary</s><b class="b2">&lt;</b><s class="kw">string</s><s class="pr">,</s><i>·</i><s class="kw">bool</s><b class="b2">&gt;</b></div><div class="a code" style="left:120px;top:200.8px"><i>·</i><i>·</i><i>·</i><i>·</i><i>·</i><i>·</i><i>·</i><i>·</i><i>·</i><i>·</i><i>·</i><i>·</i><b class="b2">{</b></div><div class="a code" style="left:120px;top:217.8px"><i>·</i><i>·</i><i>·</i><i>·</i><i>·</i><i>·</i><i>·</i><i>·</i><i>·</i><i>·</i><i>·</i><i>·</i><i>·</i><i>·</i><i>·</i><i>·</i><b class="b3">{</b><i>·</i><s class="str">&quot;x-user&quot;</s><s class="pr">,</s><i>·</i><s class="kw">false</s><i>·</i><b class="b3">}</b><s class="pr">,</s></div><div class="a code" style="left:120px;top:234.8px"><i>·</i><i>·</i><i>·</i><i>·</i><i>·</i><i>·</i><i>·</i><i>·</i><i>·</i><i>·</i><i>·</i><i>·</i><i>·</i><i>·</i><i>·</i><i>·</i><b class="b3">{</b><i>·</i><s class="str">&quot;x-channel&quot;</s><s class="pr">,</s><i>·</i><s class="kw">false</s><i>·</i><b class="b3">}</b><s class="pr">,</s></div><div class="a code" style="left:120px;top:251.8px"><i>·</i><i>·</i><i>·</i><i>·</i><i>·</i><i>·</i><i>·</i><i>·</i><i>·</i><i>·</i><i>·</i><i>·</i><i>·</i><i>·</i><i>·</i><i>·</i><b class="b3">{</b><i>·</i><s class="str">&quot;x-correlationid&quot;</s><s class="pr">,</s><i>·</i><s class="kw">false</s><i>·</i><b class="b3">}</b></div><div class="a code" style="left:120px;top:268.8px"><i>·</i><i>·</i><i>·</i><i>·</i><i>·</i><i>·</i><i>·</i><i>·</i><i>·</i><i>·</i><i>·</i><i>·</i><b class="b2">}</b><s class="pr">;</s></div><div class="a code" style="left:120px;top:285.8px"></div><div class="a code" style="left:120px;top:302.8px"><i>·</i><i>·</i><i>·</i><i>·</i><i>·</i><i>·</i><i>·</i><i>·</i><i>·</i><i>·</i><i>·</i><i>·</i><s class="kw">var</s><i>·</i><s class="lo">headers</s><i>·</i><s class="pr">=</s><i>·</i><s class="ty">ExtensionsMethods</s><s class="pr">.</s><s class="me">GetHeaderValues</s><b class="b2">(</b><s class="lo">httpContext</s><s class="pr">.</s><s class="pr">Request</s><s class="pr">.</s><s class="pr">Headers</s><s class="pr">,</s><i>·</i><s class="lo">requiredHeaders</s><s class="pr">.</s><s class="pr">Keys</s><s class="pr">.</s><s class="me">ToArray</s><b class="b3">(</b><b class="b3">)</b><b class="b2">)</b><s class="pr">;</s></div><div class="a code" style="left:120px;top:319.8px"><i>·</i><i>·</i><i>·</i><i>·</i><i>·</i><i>·</i><i>·</i><i>·</i><i>·</i><i>·</i><i>·</i><i>·</i><s class="ctl">if</s><i>·</i><b class="b2">(</b><s class="pr">!</s><s class="me">ValidateHeader</s><b class="b3">(</b><s class="lo">notify</s><s class="pr">,</s><i>·</i><s class="lo">httpContext</s><s class="pr">,</s><i>·</i><s class="lo">headers</s><s class="pr">,</s><i>·</i><s class="lo">requiredHeaders</s><b class="b3">)</b><b class="b2">)</b><i>·</i><s class="ctl">return</s><i>·</i><s class="lo">endpoint</s><s class="pr">.</s><s class="me">CustomResponse</s><b class="b2">(</b><b class="b2">)</b><s class="pr">;</s></div><div class="a code" style="left:120px;top:336.8px"></div><div class="a code" style="left:120px;top:353.8px"></div><div class="a code" style="left:120px;top:370.8px"><i>·</i><i>·</i><i>·</i><i>·</i><i>·</i><i>·</i><i>·</i><i>·</i><i>·</i><i>·</i><i>·</i><i>·</i><s class="ctl">if</s><i>·</i><b class="b2">(</b><s class="pr">!</s><s class="lo">httpContext</s><s class="pr">.</s><s class="pr">Request</s><s class="pr">.</s><s class="pr">HasFormContentType</s><b class="b2">)</b></div><div class="a code" style="left:120px;top:387.8px"><i>·</i><i>·</i><i>·</i><i>·</i><i>·</i><i>·</i><i>·</i><i>·</i><i>·</i><i>·</i><i>·</i><i>·</i><b class="b2">{</b></div><div class="a code" style="left:120px;top:404.8px"><i>·</i><i>·</i><i>·</i><i>·</i><i>·</i><i>·</i><i>·</i><i>·</i><i>·</i><i>·</i><i>·</i><i>·</i><i>·</i><i>·</i><i>·</i><i>·</i><s class="lo">notify</s><s class="pr">.</s><s class="me">Add</s><b class="b3">(</b><s class="str">&quot;Unprocessable</s><i>·</i><s class="str">Entity&quot;</s><s class="pr">,</s><i>·</i><s class="pr">422</s><b class="b3">)</b><s class="pr">;</s></div><div class="a code" style="left:120px;top:421.8px"><i>·</i><i>·</i><i>·</i><i>·</i><i>·</i><i>·</i><i>·</i><i>·</i><i>·</i><i>·</i><i>·</i><i>·</i><i>·</i><i>·</i><i>·</i><i>·</i><s class="ctl">return</s><i>·</i><s class="lo">endpoint</s><s class="pr">.</s><s class="me">CustomResponse</s><b class="b3">(</b><b class="b3">)</b><s class="pr">;</s></div><div class="a code" style="left:120px;top:438.8px"><i>·</i><i>·</i><i>·</i><i>·</i><i>·</i><i>·</i><i>·</i><i>·</i><i>·</i><i>·</i><i>·</i><i>·</i><b class="b2">}</b></div><div class="a code" style="left:120px;top:455.8px"></div><div class="a code" style="left:120px;top:472.8px"><i>·</i><i>·</i><i>·</i><i>·</i><i>·</i><i>·</i><i>·</i><i>·</i><i>·</i><i>·</i><i>·</i><i>·</i><s class="kw">var</s><i>·</i><s class="lo">request</s><i>·</i><s class="pr">=</s><i>·</i><s class="ctl">await</s><i>·</i><s class="me">CreateRequestAsync</s><b class="b2">(</b><s class="lo">httpContext</s><s class="pr">.</s><s class="pr">Request</s><b class="b2">)</b><s class="pr">;</s></div><div class="a code" style="left:120px;top:489.8px"><i>·</i><i>·</i><i>·</i><i>·</i><i>·</i><i>·</i><i>·</i><i>·</i><i>·</i><i>·</i><i>·</i><i>·</i><s class="ctl">if</s><i>·</i><b class="b2">(</b><s class="lo">request</s><i>·</i><s class="pr">==</s><i>·</i><s class="kw">null</s><b class="b2">)</b></div><div class="a code" style="left:120px;top:506.8px"><i>·</i><i>·</i><i>·</i><i>·</i><i>·</i><i>·</i><i>·</i><i>·</i><i>·</i><i>·</i><i>·</i><i>·</i><i>·</i><i>·</i><i>·</i><i>·</i><s class="ctl">return</s><i>·</i><s class="lo">endpoint</s><s class="pr">.</s><s class="me">CustomResponse</s><b class="b2">(</b><b class="b2">)</b><s class="pr">;</s></div><div class="a code" style="left:120px;top:523.8px"></div><div class="a code" style="left:120px;top:540.8px"><i>·</i><i>·</i><i>·</i><i>·</i><i>·</i><i>·</i><i>·</i><i>·</i><i>·</i><i>·</i><i>·</i><i>·</i><s class="kw">var</s><i>·</i><s class="lo">result</s><i>·</i><s class="pr">=</s><i>·</i><s class="ctl">await</s><i>·</i><s class="lo">app</s><s class="pr">.</s><s class="me">EmailSendAsync</s><b class="b2">(</b><s class="lo">request</s><b class="b2">)</b><s class="pr">;</s></div><div class="a code" style="left:120px;top:557.8px"></div><div class="a code" style="left:120px;top:574.8px"><i>·</i><i>·</i><i>·</i><i>·</i><i>·</i><i>·</i><i>·</i><i>·</i><i>·</i><i>·</i><i>·</i><i>·</i><s class="ctl">return</s><i>·</i><s class="lo">endpoint</s><s class="pr">.</s><s class="me">CustomResponse</s><b class="b2">(</b><s class="lo">result</s><b class="b2">)</b><s class="pr">;</s></div><div class="a code" style="left:120px;top:591.8px"><i>·</i><i>·</i><i>·</i><i>·</i><i>·</i><i>·</i><i>·</i><i>·</i><b class="b1">}</b><b class="b3">)</b></div><div class="a code" style="left:120px;top:608.8px"><i>·</i><i>·</i><i>·</i><i>·</i><i>·</i><i>·</i><i>·</i><i>·</i><s class="pr">.</s><s class="me">Accepts</s><b class="b3">&lt;</b><s class="ty">IFormFile</s><b class="b3">&gt;</b><b class="b3">(</b><s class="str">&quot;multipart/form-data&quot;</s><b class="b3">)</b></div><div class="a code" style="left:120px;top:625.8px"><i>·</i><i>·</i><i>·</i><i>·</i><i>·</i><i>·</i><i>·</i><i>·</i><s class="pr">.</s><s class="me">WithName</s><b class="b3">(</b><s class="str">&quot;SendEmail&quot;</s><b class="b3">)</b></div><div class="a code" style="left:120px;top:642.8px"><i>·</i><i>·</i><i>·</i><i>·</i><i>·</i><i>·</i><i>·</i><i>·</i><s class="pr">.</s><s class="me">WithOpenApi</s><b class="b3">(</b><b class="b3">)</b></div><div class="a code" style="left:120px;top:659.8px"><i>·</i><i>·</i><i>·</i><i>·</i><i>·</i><i>·</i><i>·</i><i>·</i><s class="pr">.</s><s class="me">Produces</s><b class="b3">&lt;</b><s class="ty">GenericResponse</s><b class="b3">&gt;</b><b class="b3">(</b><s class="pr">200</s><b class="b3">)</b></div><div class="a code" style="left:120px;top:676.8px"><i>·</i><i>·</i><i>·</i><i>·</i><i>·</i><i>·</i><i>·</i><i>·</i><s class="pr">.</s><s class="me">Produces</s><b class="b3">&lt;</b><s class="ty">ErrorResponse</s><b class="b3">&gt;</b><b class="b3">(</b><s class="pr">400</s><b class="b3">)</b></div><div class="a code" style="left:120px;top:693.8px"><i>·</i><i>·</i><i>·</i><i>·</i><i>·</i><i>·</i><i>·</i><i>·</i><s class="pr">.</s><s class="me">WithMetadata</s><b class="b3">(</b><s class="kw">new</s><i>·</i><s class="ty">SwaggerOperationAttribute</s><b class="b1">(</b><s class="str">&quot;Send</s><i>·</i><s class="str">a</s><i>·</i><s class="str">new</s><i>·</i><s class="str">email&quot;</s><b class="b1">)</b></div><div class="a code" style="left:120px;top:710.8px"><i>·</i><i>·</i><i>·</i><i>·</i><i>·</i><i>·</i><i>·</i><i>·</i><b class="b1">{</b></div><div class="a code" style="left:120px;top:727.8px"><i>·</i><i>·</i><i>·</i><i>·</i><i>·</i><i>·</i><i>·</i><i>·</i><i>·</i><i>·</i><i>·</i><i>·</i><s class="pr">OperationId</s><i>·</i><s class="pr">=</s><i>·</i><s class="str">&quot;SendEmail&quot;</s><s class="pr">,</s></div><div class="a code" style="left:120px;top:744.8px"><i>·</i><i>·</i><i>·</i><i>·</i><i>·</i><i>·</i><i>·</i><i>·</i><i>·</i><i>·</i><i>·</i><i>·</i><s class="pr">Tags</s><i>·</i><s class="pr">=</s><i>·</i><s style="color:#9A9AF0">new</s><s style="color:#B0B0B0">[]</s><i>·</i><b class="b2">{</b><i>·</i><s class="str">&quot;Contacts&quot;</s><i>·</i><b class="b2">}</b></div><div class="a code" style="left:120px;top:761.8px"><i>·</i><i>·</i><i>·</i><i>·</i><i>·</i><i>·</i><i>·</i><i>·</i><b class="b1">}</b><b class="b3">)</b></div><div class="a code" style="left:120px;top:778.8px"><i>·</i><i>·</i><i>·</i><i>·</i><i>·</i><i>·</i><i>·</i><i>·</i><s class="pr">.</s><s class="me">WithMetadata</s><b class="b3">(</b><s class="kw">new</s><i>·</i><s class="ty">ResponseCacheAttribute</s></div><div class="a code" style="left:120px;top:795.8px"><i>·</i><i>·</i><i>·</i><i>·</i><i>·</i><i>·</i><i>·</i><i>·</i><b class="b1">{</b></div><div class="a code" style="left:120px;top:812.8px"><i>·</i><i>·</i><i>·</i><i>·</i><i>·</i><i>·</i><i>·</i><i>·</i><i>·</i><i>·</i><i>·</i><i>·</i><s class="pr">Duration</s><i>·</i><s class="pr">=</s><i>·</i><s class="pr">60</s><s class="pr">,</s></div></div>
<div class="a" style="left:154px;top:133.0px;width:1px;height:14.5px;background:#808080"></div>
<div class="a" style="left:154px;top:161.3px;width:1px;height:20.2px;background:#808080"></div>
<div class="a" style="left:154px;top:195.3px;width:1px;height:88.2px;background:#808080"></div>
<div class="a" style="left:154px;top:297.3px;width:1px;height:20.2px;background:#808080"></div>
<div class="a" style="left:154px;top:331.3px;width:1px;height:173.2px;background:#808080"></div>
<div class="a" style="left:154px;top:518.3px;width:1px;height:309.2px;background:#808080"></div>
<div class="a" style="left:154px;top:841.3px;width:1px;height:71.2px;background:#808080"></div>
<div class="a" style="left:154px;top:926.3px;width:1px;height:32.7px;background:#808080"></div>
<svg style="left:149.7px;top:152.10000000000002px;" width="10" height="6" viewBox="0 0 10 6"><path d="M0.7,0.7 L4.7,4.7 L8.7,0.7" fill="none" stroke="#333" stroke-width="1.3"/></svg>
<svg style="left:149.7px;top:186.10000000000002px;" width="10" height="6" viewBox="0 0 10 6"><path d="M0.7,0.7 L4.7,4.7 L8.7,0.7" fill="none" stroke="#333" stroke-width="1.3"/></svg>
<svg style="left:149.7px;top:288.1px;" width="10" height="6" viewBox="0 0 10 6"><path d="M0.7,0.7 L4.7,4.7 L8.7,0.7" fill="none" stroke="#333" stroke-width="1.3"/></svg>
<svg style="left:149.7px;top:322.1px;" width="10" height="6" viewBox="0 0 10 6"><path d="M0.7,0.7 L4.7,4.7 L8.7,0.7" fill="none" stroke="#333" stroke-width="1.3"/></svg>
<svg style="left:149.7px;top:509.1px;" width="10" height="6" viewBox="0 0 10 6"><path d="M0.7,0.7 L4.7,4.7 L8.7,0.7" fill="none" stroke="#333" stroke-width="1.3"/></svg>
<svg style="left:149.7px;top:832.0999999999999px;" width="10" height="6" viewBox="0 0 10 6"><path d="M0.7,0.7 L4.7,4.7 L8.7,0.7" fill="none" stroke="#333" stroke-width="1.3"/></svg>
<svg style="left:149.7px;top:917.0999999999999px;" width="10" height="6" viewBox="0 0 10 6"><path d="M0.7,0.7 L4.7,4.7 L8.7,0.7" fill="none" stroke="#333" stroke-width="1.3"/></svg>
<div class="a" style="left:154px;top:264.4px;width:5px;height:1px;background:#808080"></div>
<div class="a" style="left:154px;top:417.4px;width:5px;height:1px;background:#808080"></div>
<div class="a" style="left:154px;top:587.4px;width:5px;height:1px;background:#808080"></div>
<div class="a" style="left:154px;top:740.4px;width:5px;height:1px;background:#808080"></div>
<div class="a" style="left:154px;top:910.4px;width:5px;height:1px;background:#808080"></div>
<svg style="left:1007.37px;top:450.8px;" width="7" height="2" viewBox="0 0 7 2"><rect x="0" y="0" width="1" height="1" fill="#777"/><rect x="2.5" y="0" width="1" height="1" fill="#777"/><rect x="5" y="0" width="1" height="1" fill="#777"/></svg>
<svg style="left:314.223px;top:892.8px;" width="7" height="2" viewBox="0 0 7 2"><rect x="0" y="0" width="1" height="1" fill="#777"/><rect x="2.5" y="0" width="1" height="1" fill="#777"/><rect x="5" y="0" width="1" height="1" fill="#777"/></svg>
<svg style="left:1524px;top:121.3px;" width="9" height="4.7" viewBox="0 0 9 4.7"><path d="M0,4.7 H9 L4.5,0 Z" fill="#868999"/></svg>
<div class="a " style="left:1517.8px;top:130px;width:22.2px;height:1.8px;background:#0000CC"></div>
<div class="a " style="left:1521px;top:182.7px;width:15px;height:125px;background:#C2C3C9"></div>
<div class="a " style="left:1535.5px;top:225.7px;width:5px;height:4px;background:#A8A8A8"></div>
<div class="a " style="left:1535.5px;top:295px;width:5px;height:4px;background:#A8A8A8"></div>
<div class="a " style="left:1535.5px;top:340.6px;width:5px;height:4px;background:#A8A8A8"></div>
<div class="a " style="left:1535.5px;top:377.8px;width:5px;height:4px;background:#A8A8A8"></div>
<div class="a " style="left:1535.5px;top:422px;width:5px;height:4px;background:#A8A8A8"></div>
<div class="a " style="left:1535.5px;top:463.7px;width:5px;height:4px;background:#A8A8A8"></div>
<div class="a " style="left:1535.5px;top:493px;width:5px;height:4px;background:#A8A8A8"></div>
<div class="a " style="left:1535.5px;top:511.70000000000005px;width:5px;height:4px;background:#A8A8A8"></div>
<div class="a " style="left:1535.5px;top:596.4px;width:5px;height:4px;background:#A8A8A8"></div>
<div class="a " style="left:1535.5px;top:622.9px;width:5px;height:4px;background:#A8A8A8"></div>
<div class="a " style="left:1535.5px;top:716.6px;width:5px;height:4px;background:#A8A8A8"></div>
<div class="a " style="left:1535.5px;top:535.8px;width:5px;height:4px;background:#108010"></div>
<svg style="left:1524px;top:948px;" width="9" height="4.7" viewBox="0 0 9 4.7"><path d="M0,0 H9 L4.5,4.7 Z" fill="#868999"/></svg>
<div class="a " style="left:32px;top:959px;width:1508.5px;height:17px;background:#F5F5F5"></div>
<div class="a " style="left:32.5px;top:959.7px;width:59px;height:15.8px;background:#fff;border:1px solid #CCCEDB"></div>
<div class="a t" style="left:34.6px;top:961px;color:#000;transform:scaleX(0.8892);transform-origin:0 0">100 %</div>
<svg style="left:83px;top:966px;" width="6" height="3" viewBox="0 0 6 3"><path d="M0,0 H6 L3.0,3 Z" fill="#717171"/></svg>
<svg style="left:94.5px;top:961.5px;" width="13" height="13" viewBox="0 0 13 13"><path d="M5,12.5 V10.5 C2.5,9.5 2,6 3.5,3.5 C5,1 9,0.5 11,2.5 C12.5,4 12.5,7 11.5,8 L12.5,10 L11,10.5 V12.5 H8.5" fill="none" stroke="#865FC5" stroke-width="1.1"/><path d="M0.5,7.5 C0.2,9 1,10.5 2.5,10.5 L5.5,13 L6.8,11.8 L4.2,9.2 C4.3,7.7 3,6.8 1.8,7 L2.8,8.3 L1.8,9 Z" fill="#865FC5"/><path d="M6.5,4.5 L8,7.5 L9.5,4.5" fill="none" stroke="#865FC5" stroke-width="0.9"/></svg>
<svg style="left:138px;top:962px;" width="12" height="12" viewBox="0 0 12 12"><circle cx="5.6" cy="5.6" r="5.5" fill="#E51400"/><path d="M3.2,3.2 L8,8 M8,3.2 L3.2,8" stroke="#fff" stroke-width="1.5"/></svg>
<div class="a t" style="left:154px;top:961px;">0</div>
<svg style="left:183.5px;top:962px;" width="12" height="11" viewBox="0 0 12 11"><path d="M5.8,0.3 L11.5,10.5 H0.2 Z" fill="#9E7B00"/><path d="M5.8,3.5 V7" stroke="#fff" stroke-width="1.4"/><rect x="5.1" y="8" width="1.4" height="1.4" fill="#fff"/></svg>
<div class="a t" style="left:200px;top:961px;">1</div>
<svg style="left:238.8px;top:962px;" width="9" height="11" viewBox="0 0 9 11"><path d="M4.5,10.5 V1 M0.8,4.5 L4.5,0.8 L8.2,4.5" fill="none" stroke="#555" stroke-width="1.2"/></svg>
<svg style="left:267.5px;top:962px;" width="9" height="11" viewBox="0 0 9 11"><path d="M4.5,0 V9.5 M0.8,6 L4.5,9.7 L8.2,6" fill="none" stroke="#555" stroke-width="1.2"/></svg>
<div class="a " style="left:293.5px;top:961px;width:1px;height:13px;background:#CCCEDB"></div>
<svg style="left:307.5px;top:961px;" width="14" height="14" viewBox="0 0 14 14"><path d="M2.5,0.5 V3.5 M1,2 H4 M5.5,2.5 V4 M4.8,3.2 H6.2" stroke="#1E78D2" stroke-width="0.9"/><path d="M13,1 L8.2,5.8" stroke="#444" stroke-width="1.6"/><path d="M6,4.5 L9.5,8 L7.5,10 L5,13.5 L0.5,9 L4,6.5 Z" fill="#E9C46A" stroke="#B8860B" stroke-width="1"/><path d="M3,9.5 L5.2,11.7 M4.5,8 L6.8,10.3" stroke="#B8860B" stroke-width="0.8"/></svg>
<svg style="left:325px;top:966px;" width="6" height="3" viewBox="0 0 6 3"><path d="M0,0 H6 L3.0,3 Z" fill="#1E1E1E"/></svg>
<svg style="left:362px;top:963.5px;" width="5" height="9" viewBox="0 0 5 9"><path d="M4.5,0 V9 L0,4.5 Z" fill="#868999"/></svg>
<div class="a " style="left:373px;top:963px;width:795px;height:9px;background:#C2C3C9"></div>
<svg style="left:1346px;top:963.5px;" width="5" height="9" viewBox="0 0 5 9"><path d="M0.5,0 V9 L5,4.5 Z" fill="#868999"/></svg>
<div class="a t" style="left:1379px;top:961px;color:#000;transform:scaleX(0.9415);transform-origin:0 0">Ln: 1</div>
<div class="a t" style="left:1421px;top:961px;color:#000;transform:scaleX(0.9476);transform-origin:0 0">Ch: 1</div>
<div class="a t" style="left:1466px;top:961px;color:#000;transform:scaleX(0.8105);transform-origin:0 0">SPC</div>
<div class="a t" style="left:1505px;top:961px;color:#000;transform:scaleX(0.8346);transform-origin:0 0">CRLF</div>
<div class="a t" style="left:31px;top:984px;;transform:scaleX(0.9693);transform-origin:0 0">Error List</div>
<div class="a " style="left:31px;top:1002px;width:46px;height:6px;background:#CCCEDB"></div>
<div class="a t" style="left:89px;top:984px;;transform:scaleX(1.0819);transform-origin:0 0">Output</div>
<div class="a " style="left:89px;top:1002px;width:38px;height:6px;background:#CCCEDB"></div>
<div class="a t" style="left:139px;top:984px;;transform:scaleX(0.9908);transform-origin:0 0">C# Interactive (.NET Core)</div>
<div class="a " style="left:139px;top:1002px;width:137px;height:6px;background:#CCCEDB"></div>
<div class="a t" style="left:288px;top:984px;;transform:scaleX(0.9919);transform-origin:0 0">Package Manager Console</div>
<div class="a " style="left:288px;top:1002px;width:140px;height:6px;background:#CCCEDB"></div>
<div class="a " style="left:0px;top:1008px;width:1920px;height:24px;background:#006EC0"></div>
<svg style="left:4px;top:1012px;" width="17" height="16" viewBox="0 0 17 16"><path d="M0.8,0.8 H15.2 V12 H10 L8,14.5 L6,12 H0.8 Z" fill="none" stroke="#fff" stroke-width="1.2"/></svg>
<div class="a t" style="left:28.5px;top:1013px;color:#fff;font-size:11.6px;transform:scaleX(0.9394);transform-origin:0 0">Ready</div>
<svg style="left:1469.5px;top:1012.5px;" width="14" height="14" viewBox="0 0 14 14"><path d="M3.5,13.5 V1 M0.8,3.5 L3.5,0.8 L6.2,3.5 M10.5,0.5 V13 M7.8,10.5 L10.5,13.2 L13.2,10.5" fill="none" stroke="#fff" stroke-width="1.3"/></svg>
<div class="a t" style="left:1490px;top:1013px;color:#fff;font-size:11.6px;transform:scaleX(1.0412);transform-origin:0 0">0 / 0</div>
<svg style="left:1519.5px;top:1017px;" width="8" height="4.5" viewBox="0 0 8 4.5"><path d="M0,4.5 H8 L4.0,0 Z" fill="#fff"/></svg>
<svg style="left:1551px;top:1013px;" width="13" height="13" viewBox="0 0 13 13"><path d="M1,12 L1.6,9 L9.5,1.1 L11.9,3.5 L4,11.4 Z M8,2.6 L10.4,5" fill="none" stroke="#fff" stroke-width="1.2"/></svg>
<div class="a t" style="left:1571px;top:1013px;color:#fff;font-size:11.6px">0</div>
<svg style="left:1600px;top:1012px;" width="16" height="16" viewBox="0 0 16 16"><circle cx="3" cy="2.8" r="2" fill="none" stroke="#fff" stroke-width="1.2"/><circle cx="3" cy="13" r="2" fill="none" stroke="#fff" stroke-width="1.2"/><circle cx="10.5" cy="3" r="2" fill="none" stroke="#fff" stroke-width="1.2"/><path d="M3,4.8 V11 M3,9 C3,6 10.5,8 10.5,5" fill="none" stroke="#fff" stroke-width="1.2"/><circle cx="11" cy="11.5" r="3.8" fill="#fff"/><path d="M11,13.5 V9.5 M9.5,11 L11,9.5 L12.5,11" stroke="#006EC0" stroke-width="1.1" fill="none"/></svg>
<div class="a t" style="left:1622px;top:1013px;color:#fff;font-size:11.6px;transform:scaleX(1.0213);transform-origin:0 0">develop</div>
<svg style="left:1669px;top:1017px;" width="8" height="4.5" viewBox="0 0 8 4.5"><path d="M0,4.5 H8 L4.0,0 Z" fill="#fff"/></svg>
<svg style="left:1705.5px;top:1012px;" width="16" height="16" viewBox="0 0 16 16"><rect x="0.6" y="0.8" width="13" height="12" fill="none" stroke="#fff" stroke-width="1.2"/><path d="M0.6,3.2 H13.6 M3.5,3.5 V10 M6,3.5 V8" stroke="#fff" stroke-width="1.2"/><circle cx="11" cy="11.5" r="3.8" fill="#fff"/><path d="M11,13.5 V9.5 M9.5,11 L11,9.5 L12.5,11" stroke="#006EC0" stroke-width="1.1" fill="none"/></svg>
<div class="a t" style="left:1727.5px;top:1013px;color:#fff;font-size:11.6px;transform:scaleX(0.9992);transform-origin:0 0">VianaHub.Pt.Email.Repo</div>
<svg style="left:1863px;top:1017px;" width="8" height="4.5" viewBox="0 0 8 4.5"><path d="M0,4.5 H8 L4.0,0 Z" fill="#fff"/></svg>
<svg style="left:1889px;top:1012px;" width="18" height="18" viewBox="0 0 18 18"><path d="M2,12 H14 C12.5,10.5 12.5,9 12.5,6.5 C12.5,3.5 10.5,1.5 8,1.5 C5.5,1.5 3.5,3.5 3.5,6.5 C3.5,9 3.5,10.5 2,12 Z M6.5,13.5 C7,15 9,15 9.5,13.5" fill="none" stroke="#fff" stroke-width="1.2"/><circle cx="14.5" cy="13.2" r="5.5" fill="#E51400"/><text x="14.5" y="17" font-family="Liberation Sans" font-size="9" font-weight="bold" fill="#fff" text-anchor="middle">1</text></svg>
<div class="a " style="left:1547px;top:71.5px;width:342px;height:885.5px;background:#F5F5F5;border:1px solid #CCCEDB"></div>
<div class="a " style="left:1548px;top:72.5px;width:340px;height:48.5px;background:#EEEEF2"></div>
<div class="a t" style="left:1552.5px;top:75.5px;font-size:11.6px;transform:scaleX(1.0018);transform-origin:0 0">Solution Explorer</div>
<svg style="left:1649px;top:80px;" width="184" height="5" viewBox="0 0 184 5"><rect x="0" y="0" width="1" height="1" fill="#8A8A90"/><rect x="4" y="0" width="1" height="1" fill="#8A8A90"/><rect x="8" y="0" width="1" height="1" fill="#8A8A90"/><rect x="12" y="0" width="1" height="1" fill="#8A8A90"/><rect x="16" y="0" width="1" height="1" fill="#8A8A90"/><rect x="20" y="0" width="1" height="1" fill="#8A8A90"/><rect x="24" y="0" width="1" height="1" fill="#8A8A90"/><rect x="28" y="0" width="1" height="1" fill="#8A8A90"/><rect x="32" y="0" width="1" height="1" fill="#8A8A90"/><rect x="36" y="0" width="1" height="1" fill="#8A8A90"/><rect x="40" y="0" width="1" height="1" fill="#8A8A90"/><rect x="44" y="0" width="1" height="1" fill="#8A8A90"/><rect x="48" y="0" width="1" height="1" fill="#8A8A90"/><rect x="52" y="0" width="1" height="1" fill="#8A8A90"/><rect x="56" y="0" width="1" height="1" fill="#8A8A90"/><rect x="60" y="0" width="1" height="1" fill="#8A8A90"/><rect x="64" y="0" width="1" height="1" fill="#8A8A90"/><rect x="68" y="0" width="1" height="1" fill="#8A8A90"/><rect x="72" y="0" width="1" height="1" fill="#8A8A90"/><rect x="76" y="0" width="1" height="1" fill="#8A8A90"/><rect x="80" y="0" width="1" height="1" fill="#8A8A90"/><rect x="84" y="0" width="1" height="1" fill="#8A8A90"/><rect x="88" y="0" width="1" height="1" fill="#8A8A90"/><rect x="92" y="0" width="1" height="1" fill="#8A8A90"/><rect x="96" y="0" width="1" height="1" fill="#8A8A90"/><rect x="100" y="0" width="1" height="1" fill="#8A8A90"/><rect x="104" y="0" width="1" height="1" fill="#8A8A90"/><rect x="108" y="0" width="1" height="1" fill="#8A8A90"/><rect x="112" y="0" width="1" height="1" fill="#8A8A90"/><rect x="116" y="0" width="1" height="1" fill="#8A8A90"/><rect x="120" y="0" width="1" height="1" fill="#8A8A90"/><rect x="124" y="0" width="1" height="1" fill="#8A8A90"/><rect x="128" y="0" width="1" height="1" fill="#8A8A90"/><rect x="132" y="0" width="1" height="1" fill="#8A8A90"/><rect x="136" y="0" width="1" height="1" fill="#8A8A90"/><rect x="140" y="0" width="1" height="1" fill="#8A8A90"/><rect x="144" y="0" width="1" height="1" fill="#8A8A90"/><rect x="148" y="0" width="1" height="1" fill="#8A8A90"/><rect x="152" y="0" width="1" height="1" fill="#8A8A90"/><rect x="156" y="0" width="1" height="1" fill="#8A8A90"/><rect x="160" y="0" width="1" height="1" fill="#8A8A90"/><rect x="164" y="0" width="1" height="1" fill="#8A8A90"/><rect x="168" y="0" width="1" height="1" fill="#8A8A90"/><rect x="172" y="0" width="1" height="1" fill="#8A8A90"/><rect x="176" y="0" width="1" height="1" fill="#8A8A90"/><rect x="180" y="0" width="1" height="1" fill="#8A8A90"/><rect x="2" y="2" width="1" height="1" fill="#8A8A90"/><rect x="6" y="2" width="1" height="1" fill="#8A8A90"/><rect x="10" y="2" width="1" height="1" fill="#8A8A90"/><rect x="14" y="2" width="1" height="1" fill="#8A8A90"/><rect x="18" y="2" width="1" height="1" fill="#8A8A90"/><rect x="22" y="2" width="1" height="1" fill="#8A8A90"/><rect x="26" y="2" width="1" height="1" fill="#8A8A90"/><rect x="30" y="2" width="1" height="1" fill="#8A8A90"/><rect x="34" y="2" width="1" height="1" fill="#8A8A90"/><rect x="38" y="2" width="1" height="1" fill="#8A8A90"/><rect x="42" y="2" width="1" height="1" fill="#8A8A90"/><rect x="46" y="2" width="1" height="1" fill="#8A8A90"/><rect x="50" y="2" width="1" height="1" fill="#8A8A90"/><rect x="54" y="2" width="1" height="1" fill="#8A8A90"/><rect x="58" y="2" width="1" height="1" fill="#8A8A90"/><rect x="62" y="2" width="1" height="1" fill="#8A8A90"/><rect x="66" y="2" width="1" height="1" fill="#8A8A90"/><rect x="70" y="2" width="1" height="1" fill="#8A8A90"/><rect x="74" y="2" width="1" height="1" fill="#8A8A90"/><rect x="78" y="2" width="1" height="1" fill="#8A8A90"/><rect x="82" y="2" width="1" height="1" fill="#8A8A90"/><rect x="86" y="2" width="1" height="1" fill="#8A8A90"/><rect x="90" y="2" width="1" height="1" fill="#8A8A90"/><rect x="94" y="2" width="1" height="1" fill="#8A8A90"/><rect x="98" y="2" width="1" height="1" fill="#8A8A90"/><rect x="102" y="2" width="1" height="1" fill="#8A8A90"/><rect x="106" y="2" width="1" height="1" fill="#8A8A90"/><rect x="110" y="2" width="1" height="1" fill="#8A8A90"/><rect x="114" y="2" width="1" height="1" fill="#8A8A90"/><rect x="118" y="2" width="1" height="1" fill="#8A8A90"/><rect x="122" y="2" width="1" height="1" fill="#8A8A90"/><rect x="126" y="2" width="1" height="1" fill="#8A8A90"/><rect x="130" y="2" width="1" height="1" fill="#8A8A90"/><rect x="134" y="2" width="1" height="1" fill="#8A8A90"/><rect x="138" y="2" width="1" height="1" fill="#8A8A90"/><rect x="142" y="2" width="1" height="1" fill="#8A8A90"/><rect x="146" y="2" width="1" height="1" fill="#8A8A90"/><rect x="150" y="2" width="1" height="1" fill="#8A8A90"/><rect x="154" y="2" width="1" height="1" fill="#8A8A90"/><rect x="158" y="2" width="1" height="1" fill="#8A8A90"/><rect x="162" y="2" width="1" height="1" fill="#8A8A90"/><rect x="166" y="2" width="1" height="1" fill="#8A8A90"/><rect x="170" y="2" width="1" height="1" fill="#8A8A90"/><rect x="174" y="2" width="1" height="1" fill="#8A8A90"/><rect x="178" y="2" width="1" height="1" fill="#8A8A90"/><rect x="182" y="2" width="1" height="1" fill="#8A8A90"/><rect x="0" y="4" width="1" height="1" fill="#8A8A90"/><rect x="4" y="4" width="1" height="1" fill="#8A8A90"/><rect x="8" y="4" width="1" height="1" fill="#8A8A90"/><rect x="12" y="4" width="1" height="1" fill="#8A8A90"/><rect x="16" y="4" width="1" height="1" fill="#8A8A90"/><rect x="20" y="4" width="1" height="1" fill="#8A8A90"/><rect x="24" y="4" width="1" height="1" fill="#8A8A90"/><rect x="28" y="4" width="1" height="1" fill="#8A8A90"/><rect x="32" y="4" width="1" height="1" fill="#8A8A90"/><rect x="36" y="4" width="1" height="1" fill="#8A8A90"/><rect x="40" y="4" width="1" height="1" fill="#8A8A90"/><rect x="44" y="4" width="1" height="1" fill="#8A8A90"/><rect x="48" y="4" width="1" height="1" fill="#8A8A90"/><rect x="52" y="4" width="1" height="1" fill="#8A8A90"/><rect x="56" y="4" width="1" height="1" fill="#8A8A90"/><rect x="60" y="4" width="1" height="1" fill="#8A8A90"/><rect x="64" y="4" width="1" height="1" fill="#8A8A90"/><rect x="68" y="4" width="1" height="1" fill="#8A8A90"/><rect x="72" y="4" width="1" height="1" fill="#8A8A90"/><rect x="76" y="4" width="1" height="1" fill="#8A8A90"/><rect x="80" y="4" width="1" height="1" fill="#8A8A90"/><rect x="84" y="4" width="1" height="1" fill="#8A8A90"/><rect x="88" y="4" width="1" height="1" fill="#8A8A90"/><rect x="92" y="4" width="1" height="1" fill="#8A8A90"/><rect x="96" y="4" width="1" height="1" fill="#8A8A90"/><rect x="100" y="4" width="1" height="1" fill="#8A8A90"/><rect x="104" y="4" width="1" height="1" fill="#8A8A90"/><rect x="108" y="4" width="1" height="1" fill="#8A8A90"/><rect x="112" y="4" width="1" height="1" fill="#8A8A90"/><rect x="116" y="4" width="1" height="1" fill="#8A8A90"/><rect x="120" y="4" width="1" height="1" fill="#8A8A90"/><rect x="124" y="4" width="1" height="1" fill="#8A8A90"/><rect x="128" y="4" width="1" height="1" fill="#8A8A90"/><rect x="132" y="4" width="1" height="1" fill="#8A8A90"/><rect x="136" y="4" width="1" height="1" fill="#8A8A90"/><rect x="140" y="4" width="1" height="1" fill="#8A8A90"/><rect x="144" y="4" width="1" height="1" fill="#8A8A90"/><rect x="148" y="4" width="1" height="1" fill="#8A8A90"/><rect x="152" y="4" width="1" height="1" fill="#8A8A90"/><rect x="156" y="4" width="1" height="1" fill="#8A8A90"/><rect x="160" y="4" width="1" height="1" fill="#8A8A90"/><rect x="164" y="4" width="1" height="1" fill="#8A8A90"/><rect x="168" y="4" width="1" height="1" fill="#8A8A90"/><rect x="172" y="4" width="1" height="1" fill="#8A8A90"/><rect x="176" y="4" width="1" height="1" fill="#8A8A90"/><rect x="180" y="4" width="1" height="1" fill="#8A8A90"/></svg>
<svg style="left:1840px;top:80px;" width="8" height="4.5" viewBox="0 0 8 4.5"><path d="M0,0 H8 L4.0,4.5 Z" fill="#1E1E1E"/></svg>
<svg style="left:1857px;top:77.5px;" width="8" height="11" viewBox="0 0 8 11"><path d="M1.5,0.8 H6.5 M2.2,0.8 V6 H5.8 V0.8 M0.5,6 H7.5 M4,6 V10.5" fill="none" stroke="#1E1E1E" stroke-width="1.3"/></svg>
<svg style="left:1872.3px;top:78px;" width="10" height="9" viewBox="0 0 10 9"><path d="M0.6,0.6 L9,8.4 M9,0.6 L0.6,8.4" stroke="#1E1E1E" stroke-width="1.5"/></svg>
<svg style="left:1555px;top:100px;" width="16" height="16" viewBox="0 0 16 16"><rect x="6.3" y="0.6" width="8.8" height="10.4" fill="#fff" stroke="#111" stroke-width="1.2"/><path d="M6.3,2.4 H15.1" stroke="#111" stroke-width="1.4"/><path d="M8.2,4.6 H9 M10,4.6 H13.5 M8.2,6.6 H9 M10,6.6 H13.5 M8.2,8.6 H9 M10,8.6 H13.5" stroke="#111" stroke-width="1"/><path d="M0.8,8.5 L2.5,7.6 L8,12 L2.5,15.4 L0.8,14.5 Z M8,7.5 V15.5 M2.6,10 V13.2 L4.8,11.6 Z" fill="none" stroke="#865FC5" stroke-width="1.3"/></svg>
<div class="a" style="left:1577.3px;top:98px;width:1px;height:19px;background:#CCCEDB"></div>
<svg style="left:1586px;top:99px;" width="15" height="15" viewBox="0 0 15 15"><path d="M0,0 H4.5 L2.5,3.5 V5 Z" fill="#1E78D2"/><circle cx="8.5" cy="8.8" r="5.2" fill="#E2E2E2" stroke="#222" stroke-width="1.2"/><path d="M8.5,5.5 V9 H11" fill="none" stroke="#222" stroke-width="1.1"/></svg>
<svg style="left:1609px;top:106px;" width="6" height="3" viewBox="0 0 6 3"><path d="M0,0 H6 L3.0,3 Z" fill="#717171"/></svg>
<svg style="left:1622px;top:103px;" width="13" height="10" viewBox="0 0 13 10"><path d="M12.5,2.8 H1 M3.5,0.5 L1,2.8 L3.5,5 M0.5,7.2 H12 M9.5,5 L12,7.2 L9.5,9.5" fill="none" stroke="#222" stroke-width="1.3"/></svg>
<svg style="left:1645px;top:102px;" width="11" height="11" viewBox="0 0 11 11"><path d="M0.8,5.5 L5.5,0.8 L10.2,5.5 M0.8,10 L5.5,5.3 L10.2,10" fill="none" stroke="#222" stroke-width="1.3"/></svg>
<svg style="left:1665px;top:100px;" width="15" height="15" viewBox="0 0 15 15"><rect x="4" y="0.6" width="10" height="9.5" fill="#E6E6E6" stroke="#555" stroke-width="1.1"/><rect x="0.6" y="4" width="9.5" height="10.4" fill="#E0E0E0" stroke="#222" stroke-width="1.2"/></svg>
<div class="a" style="left:1686px;top:98px;width:1px;height:19px;background:#CCCEDB"></div>
<div class="a " style="left:1692px;top:96.2px;width:21.7px;height:21.6px;border:1px solid #3399FF"></div>
<svg style="left:1696px;top:100px;" width="14" height="14" viewBox="0 0 14 14"><rect x="0.6" y="0.6" width="3" height="3" fill="#fff" stroke="#111" stroke-width="1.1"/><rect x="4.6" y="5.2" width="3.2" height="3.2" fill="#fff" stroke="#111" stroke-width="1.1"/><rect x="9.5" y="9.5" width="3.8" height="3.8" fill="#fff" stroke="#111" stroke-width="1.2"/><path d="M2,3.8 V6.8 H4.6 M6.2,8.5 V11.4 H9.5" fill="none" stroke="#111" stroke-width="1.1"/></svg>
<svg style="left:1718px;top:106px;" width="6" height="3" viewBox="0 0 6 3"><path d="M0,0 H6 L3.0,3 Z" fill="#717171"/></svg>
<div class="a" style="left:1729.4px;top:98px;width:1px;height:19px;background:#CCCEDB"></div>
<svg style="left:1738px;top:100px;" width="15" height="15" viewBox="0 0 15 15"><path d="M1.5,13.5 L7.5,7.5" stroke="#555" stroke-width="2.4" stroke-linecap="round"/><path d="M7,8 C5.5,5 7.5,1.5 11,1.5 L9.5,4 L11,5.5 L13.5,4 C13.5,7.5 10,9.5 7,8 Z" fill="#333" stroke="#222" stroke-width="1"/></svg>
<div class="a " style="left:1756px;top:96.2px;width:21.6px;height:21.6px;border:1px solid #3399FF"></div>
<svg style="left:1759px;top:102px;" width="16" height="12" viewBox="0 0 16 12"><path d="M0.5,10.3 H3 M2.5,10.3 V6.5 H11.5 V10.3 H2.5" fill="none" stroke="#111" stroke-width="1.2"/><path d="M10,3 V0.5 M12.5,4 L13.5,2.5 M13,6.5 H15" stroke="#D69A00" stroke-width="1.1"/></svg>
<div class="a " style="left:1550px;top:121.3px;width:336px;height:20px;background:#fff;border:1px solid #CCCEDB"></div>
<div class="a t" style="left:1555px;top:124.5px;color:#717171;transform:scaleX(0.9980);transform-origin:0 0">Search Solution Explorer (Ctrl+ç)</div>
<svg style="left:1858px;top:125px;" width="13" height="13" viewBox="0 0 13 13"><circle cx="8.3" cy="4.7" r="3.6" fill="none" stroke="#424242" stroke-width="1.5"/><path d="M5.7,7.3 L1.2,11.8" stroke="#424242" stroke-width="2"/></svg>
<svg style="left:1876px;top:130px;" width="6" height="3" viewBox="0 0 6 3"><path d="M0,0 H6 L3.0,3 Z" fill="#717171"/></svg>
<svg style="left:1552.8px;top:149.9px;" width="7" height="9" viewBox="0 0 7 9"><path d="M1.5,3.6 V2.4 A1.7,1.7 0 0 1 4.9,2.4 V3.6" fill="none" stroke="#1F6FC5" stroke-width="1.15"/><rect x="0.6" y="3.8" width="5.2" height="3.7" fill="#F4F7FC" stroke="#1F6FC5" stroke-width="1.15"/></svg>
<svg style="left:1563px;top:148px;" width="15" height="15" viewBox="0 0 15 15"><rect x="1.1" y="3" width="12" height="8.6" fill="#E8E8E8"/><rect x="0.6" y="-0.4" width="13" height="3.6" rx="0.8" fill="#F5F5F5" stroke="#111" stroke-width="1.2"/><path d="M0.6,3 V11.6 H4.5" fill="none" stroke="#333" stroke-width="1.1"/><path d="M5.0,6.0 L6.8,5.6 L9.3,7.6 L12.0,4.6 L14.0,5.6 L14.0,12.4 L12.0,13.4 L9.3,10.4 L6.8,12.4 L5.0,12.0 Z M6.3,7.6 L7.9,9.0 L6.3,10.4 Z M12.6,7.2 L10.7,9.0 L12.6,10.8 Z" fill="#7B55D0" fill-rule="evenodd"/></svg>
<div class="a t" style="left:1583px;top:146.5px;color:#1E1E1E;font-size:11.8px">Solution &#x27;VianaHub.Pt.Email&#x27; (2 of 2 projects)</div>
<svg style="left:1558.5px;top:169.6px;" width="7" height="7" viewBox="0 0 7 7"><path d="M6.5,0.2 L6.5,6.5 L0.2,6.5 Z" fill="#1E1E1E"/></svg>
<svg style="left:1580.5px;top:166.6px;" width="15" height="12" viewBox="0 0 15 12"><path d="M0.6,0.6 H6 L7,1.8 H13.4 V10.9 H0.6 Z" fill="#DCB67A" stroke="#C18B00" stroke-width="1.2"/><path d="M0.8,2.4 H13.2" stroke="#C18B00" stroke-width="0.8" opacity="0.6"/></svg>
<div class="a t" style="left:1601px;top:165.5px;color:#1E1E1E;font-size:11.8px">1-Presentation</div>
<svg style="left:1576.5px;top:188.6px;" width="7" height="7" viewBox="0 0 7 7"><path d="M6.5,0.2 L6.5,6.5 L0.2,6.5 Z" fill="#1E1E1E"/></svg>
<svg style="left:1588.8px;top:187.9px;" width="7" height="9" viewBox="0 0 7 9"><path d="M1.5,3.6 V2.4 A1.7,1.7 0 0 1 4.9,2.4 V3.6" fill="none" stroke="#1F6FC5" stroke-width="1.15"/><rect x="0.6" y="3.8" width="5.2" height="3.7" fill="#F4F7FC" stroke="#1F6FC5" stroke-width="1.15"/></svg>
<svg style="left:1598px;top:184.5px;" width="17" height="16" viewBox="0 0 17 16"><rect x="4" y="3.2" width="12" height="9" fill="#E8E8E8"/><rect x="3.6" y="0.6" width="12.8" height="3.4" rx="0.8" fill="#F8F8F8" stroke="#111" stroke-width="1.2"/><path d="M16.4,3.5 V12.4 H10" fill="none" stroke="#333" stroke-width="1.1"/><circle cx="5.9" cy="9.2" r="5" fill="#1E78D2"/><circle cx="5.9" cy="9.2" r="3.85" fill="#fff"/><path d="M0.9000000000000004,7.949999999999999 H10.9 M0.9000000000000004,10.45 H10.9 M4.550000000000001,4.199999999999999 V14.2 M7.25,4.199999999999999 V14.2" stroke="#1E78D2" stroke-width="1.05"/></svg>
<div class="a t" style="left:1619px;top:184.5px;color:#1E1E1E;font-size:11.8px;font-weight:bold;font-size:11.3px">VianaHub.Pt.Email.Api</div>
<svg style="left:1594.8px;top:207.3px;" width="7" height="10" viewBox="0 0 7 10"><path d="M0.7,0.7 L4.9,4.3 L0.7,7.9 Z" fill="none" stroke="#1E1E1E" stroke-width="1.25" stroke-linejoin="miter"/></svg>
<svg style="left:1616.5px;top:203.5px;" width="16" height="16" viewBox="0 0 16 16"><path d="M4.5,10 H3 C1,10 0.5,8.5 0.7,7.5 C1,6 2.3,5.5 3.2,5.6 C3.5,3.5 5.5,2.2 7.5,2.4 C9.5,2.6 10.8,4 11.2,5.3 C12.8,5.2 14.3,6.3 14.3,8 C14.3,9.3 13.3,10 12,10 H11" fill="none" stroke="#3C8FD8" stroke-width="1.1"/><path d="M6.3,4.3 V6.6 M9.3,4.3 V6.6" stroke="#0F9E9E" stroke-width="1.1"/><path d="M5,6.8 H10.6 V8.6 C10.6,10.2 9.5,11.2 7.8,11.2 C6.1,11.2 5,10.2 5,8.6 Z" fill="#0F9E9E"/><path d="M7.8,11 V15" stroke="#0F9E9E" stroke-width="1.2"/></svg>
<div class="a t" style="left:1637px;top:203.5px;color:#1E1E1E;font-size:11.8px">Connected Services</div>
<svg style="left:1594.8px;top:226.3px;" width="7" height="10" viewBox="0 0 7 10"><path d="M0.7,0.7 L4.9,4.3 L0.7,7.9 Z" fill="none" stroke="#1E1E1E" stroke-width="1.25" stroke-linejoin="miter"/></svg>
<svg style="left:1616.5px;top:224px;" width="16" height="14" viewBox="0 0 16 14"><rect x="0.6" y="7.5" width="4" height="4" fill="#fff" stroke="#111" stroke-width="1.1"/><rect x="3.6" y="2" width="3.5" height="3.5" fill="#fff" stroke="#111" stroke-width="1.1"/><rect x="8.6" y="6.5" width="5" height="5" fill="#E8E8E8" stroke="#111" stroke-width="1.2"/><rect x="10.6" y="0.6" width="4.5" height="4.5" fill="#E8E8E8" stroke="#111" stroke-width="1.1"/><path d="M7,3.7 H10.6 M4.8,9.2 H8.6" stroke="#888" stroke-width="1"/></svg>
<div class="a t" style="left:1637px;top:222.5px;color:#1E1E1E;font-size:11.8px">Dependencies</div>
<svg style="left:1594.8px;top:245.3px;" width="7" height="10" viewBox="0 0 7 10"><path d="M0.7,0.7 L4.9,4.3 L0.7,7.9 Z" fill="none" stroke="#1E1E1E" stroke-width="1.25" stroke-linejoin="miter"/></svg>
<svg style="left:1606.8px;top:244.9px;" width="7" height="9" viewBox="0 0 7 9"><path d="M1.5,3.6 V2.4 A1.7,1.7 0 0 1 4.9,2.4 V3.6" fill="none" stroke="#1F6FC5" stroke-width="1.15"/><rect x="0.6" y="3.8" width="5.2" height="3.7" fill="#F4F7FC" stroke="#1F6FC5" stroke-width="1.15"/></svg>
<svg style="left:1615.5px;top:242.6px;" width="16" height="15" viewBox="0 0 16 15"><path d="M2.6,0.6 H7.5 L8.5,1.8 H14.4 V10.9 H2.6 Z" fill="#DCB67A" stroke="#C18B00" stroke-width="1.2"/><path d="M3.6,8.4 L8.4,13.2" stroke="#111" stroke-width="2.3" stroke-linecap="round"/><circle cx="2.9" cy="7.6" r="2.6" fill="#111"/><path d="M0,5.2 L2.6,7.8 L4.4,6 L1.8,3.4 Z" fill="#F5F5F5"/></svg>
<div class="a t" style="left:1637px;top:241.5px;color:#1E1E1E;font-size:11.8px">Properties</div>
<svg style="left:1594.5px;top:264.6px;" width="7" height="7" viewBox="0 0 7 7"><path d="M6.5,0.2 L6.5,6.5 L0.2,6.5 Z" fill="#1E1E1E"/></svg>
<svg style="left:1606.8px;top:263.9px;" width="7" height="9" viewBox="0 0 7 9"><path d="M1.5,3.6 V2.4 A1.7,1.7 0 0 1 4.9,2.4 V3.6" fill="none" stroke="#1F6FC5" stroke-width="1.15"/><rect x="0.6" y="3.8" width="5.2" height="3.7" fill="#F4F7FC" stroke="#1F6FC5" stroke-width="1.15"/></svg>
<svg style="left:1616.5px;top:261.6px;" width="15" height="12" viewBox="0 0 15 12"><path d="M0.6,0.6 H6 L7,1.8 H13.4 V10.9 H0.6 Z" fill="#DCB67A" stroke="#C18B00" stroke-width="1.2"/><path d="M0.8,2.4 H13.2" stroke="#C18B00" stroke-width="0.8" opacity="0.6"/></svg>
<div class="a t" style="left:1637px;top:260.5px;color:#1E1E1E;font-size:11.8px">1-Presentation</div>
<svg style="left:1612.8px;top:283.3px;" width="7" height="10" viewBox="0 0 7 10"><path d="M0.7,0.7 L4.9,4.3 L0.7,7.9 Z" fill="none" stroke="#1E1E1E" stroke-width="1.25" stroke-linejoin="miter"/></svg>
<svg style="left:1624.8px;top:282.9px;" width="7" height="9" viewBox="0 0 7 9"><path d="M1.5,3.6 V2.4 A1.7,1.7 0 0 1 4.9,2.4 V3.6" fill="none" stroke="#1F6FC5" stroke-width="1.15"/><rect x="0.6" y="3.8" width="5.2" height="3.7" fill="#F4F7FC" stroke="#1F6FC5" stroke-width="1.15"/></svg>
<svg style="left:1634.5px;top:280.6px;" width="15" height="12" viewBox="0 0 15 12"><path d="M0.6,0.6 H6 L7,1.8 H13.4 V10.9 H0.6 Z" fill="#DCB67A" stroke="#C18B00" stroke-width="1.2"/><path d="M0.8,2.4 H13.2" stroke="#C18B00" stroke-width="0.8" opacity="0.6"/></svg>
<div class="a t" style="left:1655px;top:279.5px;color:#1E1E1E;font-size:11.8px">Configuration</div>
<svg style="left:1612.5px;top:302.6px;" width="7" height="7" viewBox="0 0 7 7"><path d="M6.5,0.2 L6.5,6.5 L0.2,6.5 Z" fill="#1E1E1E"/></svg>
<svg style="left:1624.8px;top:301.9px;" width="7" height="9" viewBox="0 0 7 9"><path d="M1.5,3.6 V2.4 A1.7,1.7 0 0 1 4.9,2.4 V3.6" fill="none" stroke="#1F6FC5" stroke-width="1.15"/><rect x="0.6" y="3.8" width="5.2" height="3.7" fill="#F4F7FC" stroke="#1F6FC5" stroke-width="1.15"/></svg>
<svg style="left:1634.5px;top:299.6px;" width="15" height="12" viewBox="0 0 15 12"><path d="M0.6,0.6 H6 L7,1.8 H13.4 V10.9 H0.6 Z" fill="#DCB67A" stroke="#C18B00" stroke-width="1.2"/><path d="M0.8,2.4 H13.2" stroke="#C18B00" stroke-width="0.8" opacity="0.6"/></svg>
<div class="a t" style="left:1655px;top:298.5px;color:#1E1E1E;font-size:11.8px">Endpoints</div>
<div class="a " style="left:1548px;top:315px;width:340px;height:19px;background:#CCCEDB"></div>
<svg style="left:1630.8px;top:321.3px;" width="7" height="10" viewBox="0 0 7 10"><path d="M0.7,0.7 L4.9,4.3 L0.7,7.9 Z" fill="none" stroke="#1E1E1E" stroke-width="1.25" stroke-linejoin="miter"/></svg>
<svg style="left:1642.8px;top:320.9px;" width="7" height="9" viewBox="0 0 7 9"><path d="M1.5,3.6 V2.4 A1.7,1.7 0 0 1 4.9,2.4 V3.6" fill="none" stroke="#1F6FC5" stroke-width="1.15"/><rect x="0.6" y="3.8" width="5.2" height="3.7" fill="#F4F7FC" stroke="#1F6FC5" stroke-width="1.15"/></svg>
<svg style="left:1652.7px;top:320.6px;" width="16" height="9" viewBox="0 0 16 9"><path d="M5.6,1.5 A2.9,3.3 0 1 0 5.6,6.7" fill="none" stroke="#2F8A2F" stroke-width="1.25"/><path d="M9.7,0 V6 M12.4,0 V6 M8,1.8 H14.2 M8,4.3 H14.2" stroke="#2F8A2F" stroke-width="1.25"/></svg>
<div class="a t" style="left:1673px;top:317.5px;color:#1E1E1E;font-size:11.8px">SendMailEndpoint.cs</div>
<svg style="left:1612.8px;top:340.3px;" width="7" height="10" viewBox="0 0 7 10"><path d="M0.7,0.7 L4.9,4.3 L0.7,7.9 Z" fill="none" stroke="#1E1E1E" stroke-width="1.25" stroke-linejoin="miter"/></svg>
<svg style="left:1624.8px;top:339.9px;" width="7" height="9" viewBox="0 0 7 9"><path d="M1.5,3.6 V2.4 A1.7,1.7 0 0 1 4.9,2.4 V3.6" fill="none" stroke="#1F6FC5" stroke-width="1.15"/><rect x="0.6" y="3.8" width="5.2" height="3.7" fill="#F4F7FC" stroke="#1F6FC5" stroke-width="1.15"/></svg>
<svg style="left:1634.5px;top:337.6px;" width="15" height="12" viewBox="0 0 15 12"><path d="M0.6,0.6 H6 L7,1.8 H13.4 V10.9 H0.6 Z" fill="#DCB67A" stroke="#C18B00" stroke-width="1.2"/><path d="M0.8,2.4 H13.2" stroke="#C18B00" stroke-width="0.8" opacity="0.6"/></svg>
<div class="a t" style="left:1655px;top:336.5px;color:#1E1E1E;font-size:11.8px">Validations</div>
<svg style="left:1594.5px;top:359.6px;" width="7" height="7" viewBox="0 0 7 7"><path d="M6.5,0.2 L6.5,6.5 L0.2,6.5 Z" fill="#1E1E1E"/></svg>
<svg style="left:1606.8px;top:358.9px;" width="7" height="9" viewBox="0 0 7 9"><path d="M1.5,3.6 V2.4 A1.7,1.7 0 0 1 4.9,2.4 V3.6" fill="none" stroke="#1F6FC5" stroke-width="1.15"/><rect x="0.6" y="3.8" width="5.2" height="3.7" fill="#F4F7FC" stroke="#1F6FC5" stroke-width="1.15"/></svg>
<svg style="left:1616.5px;top:356.6px;" width="15" height="12" viewBox="0 0 15 12"><path d="M0.6,0.6 H6 L7,1.8 H13.4 V10.9 H0.6 Z" fill="#DCB67A" stroke="#C18B00" stroke-width="1.2"/><path d="M0.8,2.4 H13.2" stroke="#C18B00" stroke-width="0.8" opacity="0.6"/></svg>
<div class="a t" style="left:1637px;top:355.5px;color:#1E1E1E;font-size:11.8px">2-Application</div>
<svg style="left:1612.8px;top:378.3px;" width="7" height="10" viewBox="0 0 7 10"><path d="M0.7,0.7 L4.9,4.3 L0.7,7.9 Z" fill="none" stroke="#1E1E1E" stroke-width="1.25" stroke-linejoin="miter"/></svg>
<svg style="left:1624.8px;top:377.9px;" width="7" height="9" viewBox="0 0 7 9"><path d="M1.5,3.6 V2.4 A1.7,1.7 0 0 1 4.9,2.4 V3.6" fill="none" stroke="#1F6FC5" stroke-width="1.15"/><rect x="0.6" y="3.8" width="5.2" height="3.7" fill="#F4F7FC" stroke="#1F6FC5" stroke-width="1.15"/></svg>
<svg style="left:1634.5px;top:375.6px;" width="15" height="12" viewBox="0 0 15 12"><path d="M0.6,0.6 H6 L7,1.8 H13.4 V10.9 H0.6 Z" fill="#DCB67A" stroke="#C18B00" stroke-width="1.2"/><path d="M0.8,2.4 H13.2" stroke="#C18B00" stroke-width="0.8" opacity="0.6"/></svg>
<div class="a t" style="left:1655px;top:374.5px;color:#1E1E1E;font-size:11.8px">AutoMapper</div>
<svg style="left:1612.8px;top:397.3px;" width="7" height="10" viewBox="0 0 7 10"><path d="M0.7,0.7 L4.9,4.3 L0.7,7.9 Z" fill="none" stroke="#1E1E1E" stroke-width="1.25" stroke-linejoin="miter"/></svg>
<svg style="left:1624.8px;top:396.9px;" width="7" height="9" viewBox="0 0 7 9"><path d="M1.5,3.6 V2.4 A1.7,1.7 0 0 1 4.9,2.4 V3.6" fill="none" stroke="#1F6FC5" stroke-width="1.15"/><rect x="0.6" y="3.8" width="5.2" height="3.7" fill="#F4F7FC" stroke="#1F6FC5" stroke-width="1.15"/></svg>
<svg style="left:1634.5px;top:394.6px;" width="15" height="12" viewBox="0 0 15 12"><path d="M0.6,0.6 H6 L7,1.8 H13.4 V10.9 H0.6 Z" fill="#DCB67A" stroke="#C18B00" stroke-width="1.2"/><path d="M0.8,2.4 H13.2" stroke="#C18B00" stroke-width="0.8" opacity="0.6"/></svg>
<div class="a t" style="left:1655px;top:393.5px;color:#1E1E1E;font-size:11.8px">Interfaces</div>
<svg style="left:1612.8px;top:416.3px;" width="7" height="10" viewBox="0 0 7 10"><path d="M0.7,0.7 L4.9,4.3 L0.7,7.9 Z" fill="none" stroke="#1E1E1E" stroke-width="1.25" stroke-linejoin="miter"/></svg>
<svg style="left:1624.8px;top:415.9px;" width="7" height="9" viewBox="0 0 7 9"><path d="M1.5,3.6 V2.4 A1.7,1.7 0 0 1 4.9,2.4 V3.6" fill="none" stroke="#1F6FC5" stroke-width="1.15"/><rect x="0.6" y="3.8" width="5.2" height="3.7" fill="#F4F7FC" stroke="#1F6FC5" stroke-width="1.15"/></svg>
<svg style="left:1634.5px;top:413.6px;" width="15" height="12" viewBox="0 0 15 12"><path d="M0.6,0.6 H6 L7,1.8 H13.4 V10.9 H0.6 Z" fill="#DCB67A" stroke="#C18B00" stroke-width="1.2"/><path d="M0.8,2.4 H13.2" stroke="#C18B00" stroke-width="0.8" opacity="0.6"/></svg>
<div class="a t" style="left:1655px;top:412.5px;color:#1E1E1E;font-size:11.8px">Models</div>
<svg style="left:1612.5px;top:435.6px;" width="7" height="7" viewBox="0 0 7 7"><path d="M6.5,0.2 L6.5,6.5 L0.2,6.5 Z" fill="#1E1E1E"/></svg>
<svg style="left:1624.8px;top:434.9px;" width="7" height="9" viewBox="0 0 7 9"><path d="M1.5,3.6 V2.4 A1.7,1.7 0 0 1 4.9,2.4 V3.6" fill="none" stroke="#1F6FC5" stroke-width="1.15"/><rect x="0.6" y="3.8" width="5.2" height="3.7" fill="#F4F7FC" stroke="#1F6FC5" stroke-width="1.15"/></svg>
<svg style="left:1634.5px;top:432.6px;" width="15" height="12" viewBox="0 0 15 12"><path d="M0.6,0.6 H6 L7,1.8 H13.4 V10.9 H0.6 Z" fill="#DCB67A" stroke="#C18B00" stroke-width="1.2"/><path d="M0.8,2.4 H13.2" stroke="#C18B00" stroke-width="0.8" opacity="0.6"/></svg>
<div class="a t" style="left:1655px;top:431.5px;color:#1E1E1E;font-size:11.8px">Services</div>
<svg style="left:1630.8px;top:454.3px;" width="7" height="10" viewBox="0 0 7 10"><path d="M0.7,0.7 L4.9,4.3 L0.7,7.9 Z" fill="none" stroke="#1E1E1E" stroke-width="1.25" stroke-linejoin="miter"/></svg>
<svg style="left:1642.8px;top:453.9px;" width="7" height="9" viewBox="0 0 7 9"><path d="M1.5,3.6 V2.4 A1.7,1.7 0 0 1 4.9,2.4 V3.6" fill="none" stroke="#1F6FC5" stroke-width="1.15"/><rect x="0.6" y="3.8" width="5.2" height="3.7" fill="#F4F7FC" stroke="#1F6FC5" stroke-width="1.15"/></svg>
<svg style="left:1652.7px;top:453.6px;" width="16" height="9" viewBox="0 0 16 9"><path d="M5.6,1.5 A2.9,3.3 0 1 0 5.6,6.7" fill="none" stroke="#2F8A2F" stroke-width="1.25"/><path d="M9.7,0 V6 M12.4,0 V6 M8,1.8 H14.2 M8,4.3 H14.2" stroke="#2F8A2F" stroke-width="1.25"/></svg>
<div class="a t" style="left:1673px;top:450.5px;color:#1E1E1E;font-size:11.8px">RankingApplication.cs</div>
<svg style="left:1630.8px;top:473.3px;" width="7" height="10" viewBox="0 0 7 10"><path d="M0.7,0.7 L4.9,4.3 L0.7,7.9 Z" fill="none" stroke="#1E1E1E" stroke-width="1.25" stroke-linejoin="miter"/></svg>
<svg style="left:1642.8px;top:472.9px;" width="7" height="9" viewBox="0 0 7 9"><path d="M1.5,3.6 V2.4 A1.7,1.7 0 0 1 4.9,2.4 V3.6" fill="none" stroke="#1F6FC5" stroke-width="1.15"/><rect x="0.6" y="3.8" width="5.2" height="3.7" fill="#F4F7FC" stroke="#1F6FC5" stroke-width="1.15"/></svg>
<svg style="left:1652.7px;top:472.6px;" width="16" height="9" viewBox="0 0 16 9"><path d="M5.6,1.5 A2.9,3.3 0 1 0 5.6,6.7" fill="none" stroke="#2F8A2F" stroke-width="1.25"/><path d="M9.7,0 V6 M12.4,0 V6 M8,1.8 H14.2 M8,4.3 H14.2" stroke="#2F8A2F" stroke-width="1.25"/></svg>
<div class="a t" style="left:1673px;top:469.5px;color:#1E1E1E;font-size:11.8px">SendGridApplication.cs</div>
<svg style="left:1630.8px;top:492.3px;" width="7" height="10" viewBox="0 0 7 10"><path d="M0.7,0.7 L4.9,4.3 L0.7,7.9 Z" fill="none" stroke="#1E1E1E" stroke-width="1.25" stroke-linejoin="miter"/></svg>
<svg style="left:1642.8px;top:491.9px;" width="7" height="9" viewBox="0 0 7 9"><path d="M1.5,3.6 V2.4 A1.7,1.7 0 0 1 4.9,2.4 V3.6" fill="none" stroke="#1F6FC5" stroke-width="1.15"/><rect x="0.6" y="3.8" width="5.2" height="3.7" fill="#F4F7FC" stroke="#1F6FC5" stroke-width="1.15"/></svg>
<svg style="left:1652.7px;top:491.6px;" width="16" height="9" viewBox="0 0 16 9"><path d="M5.6,1.5 A2.9,3.3 0 1 0 5.6,6.7" fill="none" stroke="#2F8A2F" stroke-width="1.25"/><path d="M9.7,0 V6 M12.4,0 V6 M8,1.8 H14.2 M8,4.3 H14.2" stroke="#2F8A2F" stroke-width="1.25"/></svg>
<div class="a t" style="left:1673px;top:488.5px;color:#1E1E1E;font-size:11.8px">SendMailApplication.cs</div>
<svg style="left:1594.8px;top:511.3px;" width="7" height="10" viewBox="0 0 7 10"><path d="M0.7,0.7 L4.9,4.3 L0.7,7.9 Z" fill="none" stroke="#1E1E1E" stroke-width="1.25" stroke-linejoin="miter"/></svg>
<svg style="left:1606.8px;top:510.9px;" width="7" height="9" viewBox="0 0 7 9"><path d="M1.5,3.6 V2.4 A1.7,1.7 0 0 1 4.9,2.4 V3.6" fill="none" stroke="#1F6FC5" stroke-width="1.15"/><rect x="0.6" y="3.8" width="5.2" height="3.7" fill="#F4F7FC" stroke="#1F6FC5" stroke-width="1.15"/></svg>
<svg style="left:1616.5px;top:508.6px;" width="15" height="12" viewBox="0 0 15 12"><path d="M0.6,0.6 H6 L7,1.8 H13.4 V10.9 H0.6 Z" fill="#DCB67A" stroke="#C18B00" stroke-width="1.2"/><path d="M0.8,2.4 H13.2" stroke="#C18B00" stroke-width="0.8" opacity="0.6"/></svg>
<div class="a t" style="left:1637px;top:507.5px;color:#1E1E1E;font-size:11.8px">3-Domain</div>
<svg style="left:1594.5px;top:530.6px;" width="7" height="7" viewBox="0 0 7 7"><path d="M6.5,0.2 L6.5,6.5 L0.2,6.5 Z" fill="#1E1E1E"/></svg>
<svg style="left:1606.8px;top:529.9px;" width="7" height="9" viewBox="0 0 7 9"><path d="M1.5,3.6 V2.4 A1.7,1.7 0 0 1 4.9,2.4 V3.6" fill="none" stroke="#1F6FC5" stroke-width="1.15"/><rect x="0.6" y="3.8" width="5.2" height="3.7" fill="#F4F7FC" stroke="#1F6FC5" stroke-width="1.15"/></svg>
<svg style="left:1616.5px;top:527.6px;" width="15" height="12" viewBox="0 0 15 12"><path d="M0.6,0.6 H6 L7,1.8 H13.4 V10.9 H0.6 Z" fill="#DCB67A" stroke="#C18B00" stroke-width="1.2"/><path d="M0.8,2.4 H13.2" stroke="#C18B00" stroke-width="0.8" opacity="0.6"/></svg>
<div class="a t" style="left:1637px;top:526.5px;color:#1E1E1E;font-size:11.8px">4-Infra</div>
<svg style="left:1612.8px;top:549.3px;" width="7" height="10" viewBox="0 0 7 10"><path d="M0.7,0.7 L4.9,4.3 L0.7,7.9 Z" fill="none" stroke="#1E1E1E" stroke-width="1.25" stroke-linejoin="miter"/></svg>
<svg style="left:1624.8px;top:548.9px;" width="7" height="9" viewBox="0 0 7 9"><path d="M1.5,3.6 V2.4 A1.7,1.7 0 0 1 4.9,2.4 V3.6" fill="none" stroke="#1F6FC5" stroke-width="1.15"/><rect x="0.6" y="3.8" width="5.2" height="3.7" fill="#F4F7FC" stroke="#1F6FC5" stroke-width="1.15"/></svg>
<svg style="left:1634.5px;top:546.6px;" width="15" height="12" viewBox="0 0 15 12"><path d="M0.6,0.6 H6 L7,1.8 H13.4 V10.9 H0.6 Z" fill="#DCB67A" stroke="#C18B00" stroke-width="1.2"/><path d="M0.8,2.4 H13.2" stroke="#C18B00" stroke-width="0.8" opacity="0.6"/></svg>
<div class="a t" style="left:1655px;top:545.5px;color:#1E1E1E;font-size:11.8px">Integration</div>
<svg style="left:1612.5px;top:568.6px;" width="7" height="7" viewBox="0 0 7 7"><path d="M6.5,0.2 L6.5,6.5 L0.2,6.5 Z" fill="#1E1E1E"/></svg>
<svg style="left:1624.8px;top:567.9px;" width="7" height="9" viewBox="0 0 7 9"><path d="M1.5,3.6 V2.4 A1.7,1.7 0 0 1 4.9,2.4 V3.6" fill="none" stroke="#1F6FC5" stroke-width="1.15"/><rect x="0.6" y="3.8" width="5.2" height="3.7" fill="#F4F7FC" stroke="#1F6FC5" stroke-width="1.15"/></svg>
<svg style="left:1634.5px;top:565.6px;" width="15" height="12" viewBox="0 0 15 12"><path d="M0.6,0.6 H6 L7,1.8 H13.4 V10.9 H0.6 Z" fill="#DCB67A" stroke="#C18B00" stroke-width="1.2"/><path d="M0.8,2.4 H13.2" stroke="#C18B00" stroke-width="0.8" opacity="0.6"/></svg>
<div class="a t" style="left:1655px;top:564.5px;color:#1E1E1E;font-size:11.8px">IoC</div>
<svg style="left:1630.8px;top:587.3px;" width="7" height="10" viewBox="0 0 7 10"><path d="M0.7,0.7 L4.9,4.3 L0.7,7.9 Z" fill="none" stroke="#1E1E1E" stroke-width="1.25" stroke-linejoin="miter"/></svg>
<svg style="left:1642.8px;top:586.9px;" width="7" height="9" viewBox="0 0 7 9"><path d="M1.5,3.6 V2.4 A1.7,1.7 0 0 1 4.9,2.4 V3.6" fill="none" stroke="#1F6FC5" stroke-width="1.15"/><rect x="0.6" y="3.8" width="5.2" height="3.7" fill="#F4F7FC" stroke="#1F6FC5" stroke-width="1.15"/></svg>
<svg style="left:1652.7px;top:586.6px;" width="16" height="9" viewBox="0 0 16 9"><path d="M5.6,1.5 A2.9,3.3 0 1 0 5.6,6.7" fill="none" stroke="#2F8A2F" stroke-width="1.25"/><path d="M9.7,0 V6 M12.4,0 V6 M8,1.8 H14.2 M8,4.3 H14.2" stroke="#2F8A2F" stroke-width="1.25"/></svg>
<div class="a t" style="left:1673px;top:583.5px;color:#1E1E1E;font-size:11.8px">BootStrapper.cs</div>
<svg style="left:1612.5px;top:606.6px;" width="7" height="7" viewBox="0 0 7 7"><path d="M6.5,0.2 L6.5,6.5 L0.2,6.5 Z" fill="#1E1E1E"/></svg>
<svg style="left:1624.8px;top:605.9px;" width="7" height="9" viewBox="0 0 7 9"><path d="M1.5,3.6 V2.4 A1.7,1.7 0 0 1 4.9,2.4 V3.6" fill="none" stroke="#1F6FC5" stroke-width="1.15"/><rect x="0.6" y="3.8" width="5.2" height="3.7" fill="#F4F7FC" stroke="#1F6FC5" stroke-width="1.15"/></svg>
<svg style="left:1634.5px;top:603.6px;" width="15" height="12" viewBox="0 0 15 12"><path d="M0.6,0.6 H6 L7,1.8 H13.4 V10.9 H0.6 Z" fill="#DCB67A" stroke="#C18B00" stroke-width="1.2"/><path d="M0.8,2.4 H13.2" stroke="#C18B00" stroke-width="0.8" opacity="0.6"/></svg>
<div class="a t" style="left:1655px;top:602.5px;color:#1E1E1E;font-size:11.8px">Services</div>
<svg style="left:1630.8px;top:625.3px;" width="7" height="10" viewBox="0 0 7 10"><path d="M0.7,0.7 L4.9,4.3 L0.7,7.9 Z" fill="none" stroke="#1E1E1E" stroke-width="1.25" stroke-linejoin="miter"/></svg>
<svg style="left:1642.8px;top:624.9px;" width="7" height="9" viewBox="0 0 7 9"><path d="M1.5,3.6 V2.4 A1.7,1.7 0 0 1 4.9,2.4 V3.6" fill="none" stroke="#1F6FC5" stroke-width="1.15"/><rect x="0.6" y="3.8" width="5.2" height="3.7" fill="#F4F7FC" stroke="#1F6FC5" stroke-width="1.15"/></svg>
<svg style="left:1652.7px;top:624.6px;" width="16" height="9" viewBox="0 0 16 9"><path d="M5.6,1.5 A2.9,3.3 0 1 0 5.6,6.7" fill="none" stroke="#2F8A2F" stroke-width="1.25"/><path d="M9.7,0 V6 M12.4,0 V6 M8,1.8 H14.2 M8,4.3 H14.2" stroke="#2F8A2F" stroke-width="1.25"/></svg>
<div class="a t" style="left:1673px;top:621.5px;color:#1E1E1E;font-size:11.8px">RankingFileService.cs</div>
<svg style="left:1594.8px;top:644.3px;" width="7" height="10" viewBox="0 0 7 10"><path d="M0.7,0.7 L4.9,4.3 L0.7,7.9 Z" fill="none" stroke="#1E1E1E" stroke-width="1.25" stroke-linejoin="miter"/></svg>
<svg style="left:1606.8px;top:643.9px;" width="7" height="9" viewBox="0 0 7 9"><path d="M1.5,3.6 V2.4 A1.7,1.7 0 0 1 4.9,2.4 V3.6" fill="none" stroke="#1F6FC5" stroke-width="1.15"/><rect x="0.6" y="3.8" width="5.2" height="3.7" fill="#F4F7FC" stroke="#1F6FC5" stroke-width="1.15"/></svg>
<svg style="left:1616.5px;top:641.6px;" width="15" height="12" viewBox="0 0 15 12"><path d="M0.6,0.6 H6 L7,1.8 H13.4 V10.9 H0.6 Z" fill="#DCB67A" stroke="#C18B00" stroke-width="1.2"/><path d="M0.8,2.4 H13.2" stroke="#C18B00" stroke-width="0.8" opacity="0.6"/></svg>
<div class="a t" style="left:1637px;top:640.5px;color:#1E1E1E;font-size:11.8px">Templates</div>
<svg style="left:1594.8px;top:663.3px;" width="7" height="10" viewBox="0 0 7 10"><path d="M0.7,0.7 L4.9,4.3 L0.7,7.9 Z" fill="none" stroke="#1E1E1E" stroke-width="1.25" stroke-linejoin="miter"/></svg>
<svg style="left:1606.8px;top:662.9px;" width="7" height="9" viewBox="0 0 7 9"><path d="M1.5,3.6 V2.4 A1.7,1.7 0 0 1 4.9,2.4 V3.6" fill="none" stroke="#1F6FC5" stroke-width="1.15"/><rect x="0.6" y="3.8" width="5.2" height="3.7" fill="#F4F7FC" stroke="#1F6FC5" stroke-width="1.15"/></svg>
<svg style="left:1617.5px;top:659.6px;" width="11" height="14" viewBox="0 0 11 14"><path d="M0.6,0.6 H7.5 L10.4,3.5 V13.4 H0.6 Z" fill="#F0F0F0" stroke="#424242" stroke-width="1.2"/><path d="M7.4,0.6 V3.6 H10.4" fill="#424242" stroke="#424242" stroke-width="1"/><path d="M4.2,5.2 C3,5.2 3.2,6 3.2,7 C3.2,8 3,8.6 2.2,8.6 C3,8.6 3.2,9.2 3.2,10.2 C3.2,11.2 3,12 4.2,12 M6.6,5.2 C7.8,5.2 7.6,6 7.6,7 C7.6,8 7.8,8.6 8.6,8.6 C7.8,8.6 7.6,9.2 7.6,10.2 C7.6,11.2 7.8,12 6.6,12" fill="none" stroke="#222" stroke-width="0.9"/></svg>
<div class="a t" style="left:1637px;top:659.5px;color:#1E1E1E;font-size:11.8px">appsettings.json</div>
<svg style="left:1594.8px;top:682.3px;" width="7" height="10" viewBox="0 0 7 10"><path d="M0.7,0.7 L4.9,4.3 L0.7,7.9 Z" fill="none" stroke="#1E1E1E" stroke-width="1.25" stroke-linejoin="miter"/></svg>
<svg style="left:1606.8px;top:681.9px;" width="7" height="9" viewBox="0 0 7 9"><path d="M1.5,3.6 V2.4 A1.7,1.7 0 0 1 4.9,2.4 V3.6" fill="none" stroke="#1F6FC5" stroke-width="1.15"/><rect x="0.6" y="3.8" width="5.2" height="3.7" fill="#F4F7FC" stroke="#1F6FC5" stroke-width="1.15"/></svg>
<svg style="left:1616.7px;top:681.6px;" width="16" height="9" viewBox="0 0 16 9"><path d="M5.6,1.5 A2.9,3.3 0 1 0 5.6,6.7" fill="none" stroke="#2F8A2F" stroke-width="1.25"/><path d="M9.7,0 V6 M12.4,0 V6 M8,1.8 H14.2 M8,4.3 H14.2" stroke="#2F8A2F" stroke-width="1.25"/></svg>
<div class="a t" style="left:1637px;top:678.5px;color:#1E1E1E;font-size:11.8px">Program.cs</div>
<svg style="left:1606.8px;top:700.9px;" width="7" height="9" viewBox="0 0 7 9"><path d="M1.5,3.6 V2.4 A1.7,1.7 0 0 1 4.9,2.4 V3.6" fill="none" stroke="#1F6FC5" stroke-width="1.15"/><rect x="0.6" y="3.8" width="5.2" height="3.7" fill="#F4F7FC" stroke="#1F6FC5" stroke-width="1.15"/></svg>
<svg style="left:1617.5px;top:697.6px;" width="11" height="14" viewBox="0 0 11 14"><path d="M0.6,0.6 H7.5 L10.4,3.5 V13.4 H0.6 Z" fill="#F0F0F0" stroke="#424242" stroke-width="1.2"/><path d="M7.4,0.6 V3.6 H10.4" fill="#424242" stroke="#424242" stroke-width="1"/><path d="M2.3,6.3 H6.5 M2.3,8.6 H8.5 M2.3,10.9 H8.5" stroke="#222" stroke-width="1.1"/></svg>
<div class="a t" style="left:1637px;top:697.5px;color:#1E1E1E;font-size:11.8px">rankings.txt</div>
<svg style="left:1606.8px;top:719.9px;" width="7" height="9" viewBox="0 0 7 9"><path d="M1.5,3.6 V2.4 A1.7,1.7 0 0 1 4.9,2.4 V3.6" fill="none" stroke="#1F6FC5" stroke-width="1.15"/><rect x="0.6" y="3.8" width="5.2" height="3.7" fill="#F4F7FC" stroke="#1F6FC5" stroke-width="1.15"/></svg>
<svg style="left:1616px;top:716.3px;" width="17" height="16" viewBox="0 0 17 16"><path d="M6,1 H12.5 V10.5" fill="#E6E6E6" stroke="none"/><rect x="6.5" y="1.5" width="5.5" height="8" fill="#E2E2E2"/><path d="M5.6,4.2 V1.8 C5.6,1.2 6,1 6.5,1 H14 C15.9,1 15.9,4.4 14,4.4 H12.6" fill="none" stroke="#111" stroke-width="1.1"/><path d="M12.6,1 V10.3 C12.6,10.9 12.2,11.2 11.5,11.2" fill="none" stroke="#111" stroke-width="1.1"/><circle cx="5" cy="10.4" r="5" fill="#1E78D2"/><circle cx="5" cy="10.4" r="3.85" fill="#fff"/><path d="M0,9.15 H10 M0,11.65 H10 M3.65,5.4 V15.4 M6.35,5.4 V15.4" stroke="#1E78D2" stroke-width="1.05"/></svg>
<div class="a t" style="left:1637px;top:716.5px;color:#1E1E1E;font-size:11.8px">VianaHub.Pt.Email.Api.http</div>
<svg style="left:1558.8px;top:739.3px;" width="7" height="10" viewBox="0 0 7 10"><path d="M0.7,0.7 L4.9,4.3 L0.7,7.9 Z" fill="none" stroke="#1E1E1E" stroke-width="1.25" stroke-linejoin="miter"/></svg>
<svg style="left:1580.5px;top:736.6px;" width="15" height="12" viewBox="0 0 15 12"><path d="M0.6,0.6 H6 L7,1.8 H13.4 V10.9 H0.6 Z" fill="#DCB67A" stroke="#C18B00" stroke-width="1.2"/><path d="M0.8,2.4 H13.2" stroke="#C18B00" stroke-width="0.8" opacity="0.6"/></svg>
<div class="a t" style="left:1601px;top:735.5px;color:#1E1E1E;font-size:11.8px">5-tests</div>
<div class="a " style="left:1547px;top:956px;width:101px;height:21px;background:#F5F5F5;border:1px solid #CCCEDB;border-top:none"></div>
<div class="a t" style="left:1553px;top:959px;color:#0E70C0;transform:scaleX(0.9989);transform-origin:0 0">Solution Explorer</div>
<div class="a t" style="left:1654px;top:959px;;transform:scaleX(0.9841);transform-origin:0 0">Git Changes</div>
<div class="a t" style="left:1730px;top:959px;;transform:scaleX(1.0380);transform-origin:0 0">GitHub Copilot Chat</div>
<div class="a " style="left:1914.3px;top:71.6px;width:5.7px;height:66.9px;background:#CCCEDB"></div>
<div class="a v" style="left:1896px;top:71.6px;width:14px;transform:scaleY(1.0498);transform-origin:0 0;">Notifications</div>
<div class="a " style="left:1914.3px;top:151.8px;width:5.7px;height:51.9px;background:#CCCEDB"></div>
<div class="a v" style="left:1896px;top:151.8px;width:14px;transform:scaleY(0.9733);transform-origin:0 0;">Properties</div>
</body></html>
